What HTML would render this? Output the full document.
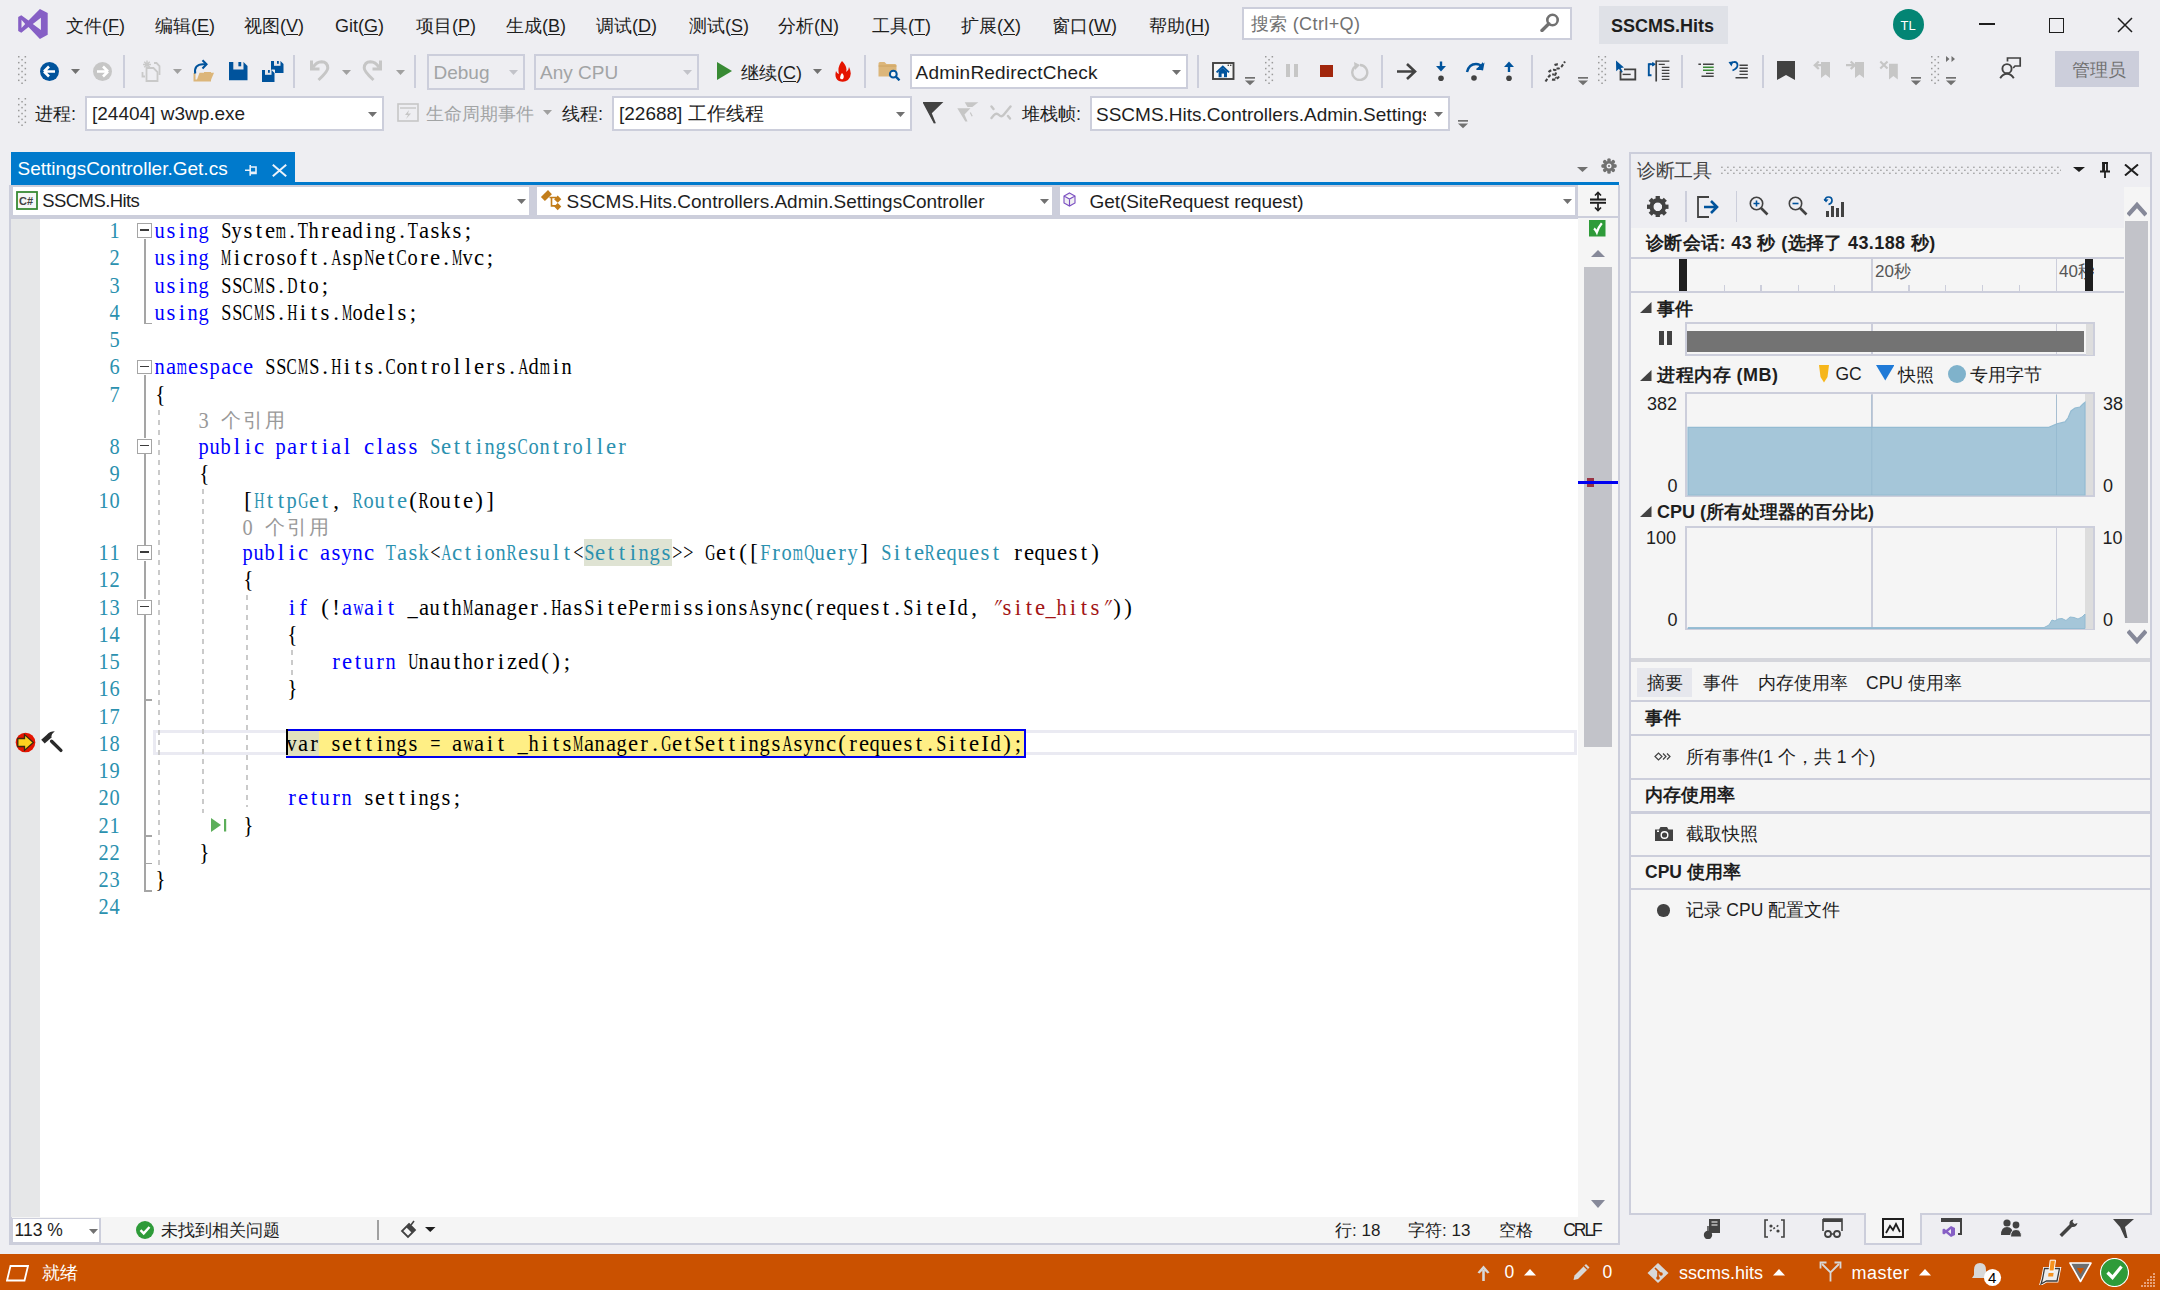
<!DOCTYPE html>
<html><head><meta charset="utf-8"><title>VS</title>
<style>
html,body{margin:0;padding:0;}
body{width:2160px;height:1290px;overflow:hidden;position:relative;background:#EEEEF2;font-family:"Liberation Sans",sans-serif;}
body div, body svg{position:absolute;}
.t{white-space:nowrap;}
u{text-decoration:underline;text-underline-offset:2px;text-decoration-thickness:1px;}
.code{font-family:"Liberation Serif",serif;font-size:22.8px;line-height:27px;white-space:nowrap;}
.c{display:inline-block;width:11px;text-align:center;font-style:normal;}
.c b{display:inline-block;font-weight:normal;}
</style></head><body>
<svg style="left:18px;top:9px;" width="30" height="30" viewBox="0 0 30 30"><path fill="#865FC5" fill-rule="evenodd" d="M21.9 0.1 L29.7 4 V25.7 L21.9 29.9 L10.5 18.1 L3.3 23.7 L0.2 22 V8 L3.3 6.2 L10.5 11.6 Z M3.5 10.8 L7.2 14.9 L3.5 18.9 Z M22.9 8.8 L14.8 14.9 L22.9 21 Z"/></svg><div class="t" style="left:66px;top:16.76px;font-size:18px;line-height:18px;color:#1E1E1E;">文件(<u>F</u>)</div><div class="t" style="left:155px;top:16.76px;font-size:18px;line-height:18px;color:#1E1E1E;">编辑(<u>E</u>)</div><div class="t" style="left:244px;top:16.76px;font-size:18px;line-height:18px;color:#1E1E1E;">视图(<u>V</u>)</div><div class="t" style="left:335px;top:16.76px;font-size:18px;line-height:18px;color:#1E1E1E;">Git(<u>G</u>)</div><div class="t" style="left:416px;top:16.76px;font-size:18px;line-height:18px;color:#1E1E1E;">项目(<u>P</u>)</div><div class="t" style="left:506px;top:16.76px;font-size:18px;line-height:18px;color:#1E1E1E;">生成(<u>B</u>)</div><div class="t" style="left:596px;top:16.76px;font-size:18px;line-height:18px;color:#1E1E1E;">调试(<u>D</u>)</div><div class="t" style="left:689px;top:16.76px;font-size:18px;line-height:18px;color:#1E1E1E;">测试(<u>S</u>)</div><div class="t" style="left:778px;top:16.76px;font-size:18px;line-height:18px;color:#1E1E1E;">分析(<u>N</u>)</div><div class="t" style="left:872px;top:16.76px;font-size:18px;line-height:18px;color:#1E1E1E;">工具(<u>T</u>)</div><div class="t" style="left:961px;top:16.76px;font-size:18px;line-height:18px;color:#1E1E1E;">扩展(<u>X</u>)</div><div class="t" style="left:1052px;top:16.76px;font-size:18px;line-height:18px;color:#1E1E1E;">窗口(<u>W</u>)</div><div class="t" style="left:1149px;top:16.76px;font-size:18px;line-height:18px;color:#1E1E1E;">帮助(<u>H</u>)</div><div style="left:1242px;top:7px;width:330px;height:33px;background:#fff;border:2px solid #CCCEDB;box-sizing:border-box"></div><div class="t" style="left:1250.5px;top:14.76px;font-size:18px;line-height:18px;color:#717171;letter-spacing:0.400px;">搜索 (Ctrl+Q)</div><svg style="left:1540px;top:13px;" width="20" height="19" viewBox="0 0 20 19"><circle cx="12.5" cy="7" r="5.2" fill="none" stroke="#717171" stroke-width="2.6"/><path d="M8.8 10.8 L2 17.5" stroke="#717171" stroke-width="3.4" stroke-linecap="round"/></svg><div style="left:1599px;top:6px;width:129px;height:38px;background:#DFE1E7"></div><div class="t" style="left:1611px;top:16.76px;font-size:18px;line-height:18px;color:#1E1E1E;font-weight:bold;">SSCMS.Hits</div><div style="left:1893px;top:9px;width:31px;height:31px;background:#038574;border-radius:50%"></div><div class="t" style="left:1900.5px;top:19.00px;font-size:13px;line-height:13px;color:#fff;">TL</div><div style="left:1979px;top:23px;width:16px;height:1.6px;background:#1E1E1E"></div><div style="left:2048.5px;top:17.5px;width:15px;height:15px;border:1.6px solid #1E1E1E;box-sizing:border-box"></div><svg style="left:2117px;top:17px;" width="16" height="16" viewBox="0 0 16 16"><path d="M1 1 L15 15 M15 1 L1 15" stroke="#1E1E1E" stroke-width="1.5"/></svg><svg style="left:17.5px;top:56px;" width="9" height="29" viewBox="0 0 9 29"><rect x="0" y="0.0" width="1.5" height="1.5" fill="#9A9A9A"/><rect x="6.6" y="0.0" width="1.5" height="1.5" fill="#9A9A9A"/><rect x="3.3" y="3.0" width="1.5" height="1.5" fill="#9A9A9A"/><rect x="0" y="5.9" width="1.5" height="1.5" fill="#9A9A9A"/><rect x="6.6" y="5.9" width="1.5" height="1.5" fill="#9A9A9A"/><rect x="3.3" y="8.9" width="1.5" height="1.5" fill="#9A9A9A"/><rect x="0" y="11.8" width="1.5" height="1.5" fill="#9A9A9A"/><rect x="6.6" y="11.8" width="1.5" height="1.5" fill="#9A9A9A"/><rect x="3.3" y="14.8" width="1.5" height="1.5" fill="#9A9A9A"/><rect x="0" y="17.7" width="1.5" height="1.5" fill="#9A9A9A"/><rect x="6.6" y="17.7" width="1.5" height="1.5" fill="#9A9A9A"/><rect x="3.3" y="20.6" width="1.5" height="1.5" fill="#9A9A9A"/><rect x="0" y="23.6" width="1.5" height="1.5" fill="#9A9A9A"/><rect x="6.6" y="23.6" width="1.5" height="1.5" fill="#9A9A9A"/><rect x="3.3" y="26.5" width="1.5" height="1.5" fill="#9A9A9A"/></svg><svg style="left:40px;top:62px;" width="19" height="19" viewBox="0 0 19 19"><circle cx="9.5" cy="9.5" r="9.5" fill="#00539C"/><path d="M4 9.5 L9 4.5 M4 9.5 L9 14.5 M4 9.5 H15" stroke="#fff" stroke-width="2.6" fill="none"/></svg><svg style="left:71px;top:69px;" width="9" height="5" viewBox="0 0 9 5"><path d="M0 0 H9 L4.5 5 Z" fill="#717171"/></svg><svg style="left:93px;top:62px;" width="19" height="19" viewBox="0 0 19 19"><circle cx="9.5" cy="9.5" r="9.5" fill="#C6C6C6"/><path d="M15 9.5 L10 4.5 M15 9.5 L10 14.5 M15 9.5 H4" stroke="#fff" stroke-width="2.6" fill="none"/></svg><div style="left:123px;top:55px;width:2px;height:33px;background:#CCCEDB"></div><svg style="left:140px;top:59px;" width="22" height="23" viewBox="0 0 22 23"><path d="M3 5.5 H11 M7 1.5 V9.5 M4.2 2.7 L9.8 8.3 M9.8 2.7 L4.2 8.3" stroke="#C9C9C9" stroke-width="1.4"/><path d="M14 4 H16.5 L19.5 7 V16" stroke="#C9C9C9" stroke-width="1.8" fill="none"/><path d="M2.5 13 V17.5 H5 M6.5 9 V22 H17.5 V13 L13.5 9 Z" stroke="#C9C9C9" stroke-width="1.8" fill="none"/></svg><svg style="left:173px;top:69px;" width="9" height="5" viewBox="0 0 9 5"><path d="M0 0 H9 L4.5 5 Z" fill="#A0A0A0"/></svg><svg style="left:192px;top:59px;" width="23" height="23" viewBox="0 0 23 23"><path d="M2.5 14 V21.5 H18 V14 H12" stroke="#DCB67A" stroke-width="2" fill="none"/><path d="M4.5 22 L7.5 13.8 H22 L18.5 22 Z" fill="#DCB67A"/><path d="M3.2 14.5 Q1.8 5.5 11 5.2 H13" stroke="#00539C" stroke-width="2.1" fill="none"/><path d="M10.5 1.2 L14.5 5.3 L10.5 9.4" stroke="#00539C" stroke-width="2.1" fill="none"/></svg><svg style="left:228.5px;top:61.8px;" width="19" height="19" viewBox="0 0 19 19"><path d="M0 0 H14.5 L18.5 4 V18.3 H0 Z" fill="#00539C"/><rect x="4.3" y="0" width="10.2" height="7.5" fill="#E8E8EC"/><rect x="9.4" y="0" width="2.8" height="4.3" fill="#00539C"/></svg><svg style="left:260.5px;top:59.5px;" width="23" height="23" viewBox="0 0 23 23"><g transform="translate(10 1)"><path d="M0 0 H9.5 L12.5 3 V12 H0 Z" fill="#00539C"/><rect x="3" y="0" width="6.5" height="4.8" fill="#E8E8EC"/><rect x="6" y="0" width="1.8" height="2.8" fill="#00539C"/></g><path d="M10.5 9.5 H13.5 L14 10 V22 H0.5 V10 H10.5 Z" fill="#EEEEF2"/><g transform="translate(1 10)"><path d="M0 0 H9.5 L12.5 3 V12 H0 Z" fill="#00539C"/><rect x="3" y="0" width="6.5" height="4.8" fill="#E8E8EC"/><rect x="6" y="0" width="1.8" height="2.8" fill="#00539C"/></g></svg><div style="left:293px;top:55px;width:2px;height:33px;background:#CCCEDB"></div><svg style="left:308px;top:58px;" width="22" height="24" viewBox="0 0 22 24"><path d="M3.5 2.5 V11 H11.5" stroke="#C6C6C6" stroke-width="3" fill="none"/><path d="M5 9.5 Q8.5 3.8 13.5 3.8 Q19.5 4 19.8 10 Q19.8 13.5 10.5 22" stroke="#C6C6C6" stroke-width="3" fill="none"/></svg><svg style="left:342px;top:70px;" width="9" height="5" viewBox="0 0 9 5"><path d="M0 0 H9 L4.5 5 Z" fill="#A0A0A0"/></svg><svg style="left:362px;top:58px;" width="22" height="24" viewBox="0 0 22 24"><path d="M18.5 2.5 V11 H10.5" stroke="#C6C6C6" stroke-width="3" fill="none"/><path d="M17 9.5 Q13.5 3.8 8.5 3.8 Q2.5 4 2.2 10 Q2.2 13.5 11.5 22" stroke="#C6C6C6" stroke-width="3" fill="none"/></svg><svg style="left:396px;top:70px;" width="9" height="5" viewBox="0 0 9 5"><path d="M0 0 H9 L4.5 5 Z" fill="#A0A0A0"/></svg><div style="left:414px;top:55px;width:2px;height:33px;background:#CCCEDB"></div><div style="left:427px;top:54px;width:98px;height:36px;background:transparent;border:2px solid #CCCEDB;box-sizing:border-box"></div><div class="t" style="left:433.5px;top:63.42px;font-size:19px;line-height:19px;color:#A2A4A5;">Debug</div><svg style="left:509px;top:70.0px;" width="9" height="5" viewBox="0 0 9 5"><path d="M0 0 H9 L4.5 5 Z" fill="#C2C3C9"/></svg><div style="left:534px;top:54px;width:165px;height:36px;background:transparent;border:2px solid #CCCEDB;box-sizing:border-box"></div><div class="t" style="left:540px;top:63.42px;font-size:19px;line-height:19px;color:#A2A4A5;">Any CPU</div><svg style="left:683px;top:70.0px;" width="9" height="5" viewBox="0 0 9 5"><path d="M0 0 H9 L4.5 5 Z" fill="#C2C3C9"/></svg><svg style="left:717px;top:62px;" width="15" height="18" viewBox="0 0 15 18"><path d="M0 0 L15 9 L0 18 Z" fill="#388A34"/></svg><div class="t" style="left:741px;top:64.26px;font-size:18px;line-height:18px;color:#1E1E1E;">继续(<u>C</u>)</div><svg style="left:813px;top:69px;" width="9" height="5" viewBox="0 0 9 5"><path d="M0 0 H9 L4.5 5 Z" fill="#717171"/></svg><svg style="left:834px;top:61px;" width="17" height="21" viewBox="0 0 17 21"><path d="M8 0 Q14 6 12 11 Q15 9 15 6 Q19 14 14 19 Q10 22 5 20 Q0 17 2 10 Q3 13 5 13 Q3 6 8 0 Z" fill="#E51400"/><path d="M8 12 Q11 15 9 18 Q7 19 6 17 Q6 14 8 12 Z" fill="#fff"/></svg><div style="left:864px;top:55px;width:2px;height:33px;background:#CCCEDB"></div><svg style="left:878px;top:61px;" width="23" height="20" viewBox="0 0 23 20"><path d="M0.5 2.5 Q0.5 1 2 1 H6.5 L8.5 3 H17 Q18.5 3 18.5 4.5 V15.5 H0.5 Z" fill="#DCB67A"/><path d="M0.5 5 H18.5" stroke="#C9A05E" stroke-width="0.8"/><circle cx="15.3" cy="13.2" r="3.4" fill="#F6F6F6" stroke="#00539C" stroke-width="2"/><path d="M17.8 15.7 L21.5 19.3" stroke="#00539C" stroke-width="2.4"/></svg><div style="left:910px;top:54px;width:278px;height:35px;background:#fff;border:2px solid #CCCEDB;box-sizing:border-box"></div><svg style="left:1172px;top:69.5px;" width="9" height="5" viewBox="0 0 9 5"><path d="M0 0 H9 L4.5 5 Z" fill="#717171"/></svg><div class="t" style="left:915.5px;top:62.92px;font-size:19px;line-height:19px;color:#1E1E1E;letter-spacing:0.208px;">AdminRedirectCheck</div><div style="left:1197px;top:55px;width:2px;height:33px;background:#CCCEDB"></div><svg style="left:1211.5px;top:62px;" width="23" height="18" viewBox="0 0 23 18"><rect x="1" y="1" width="20.5" height="16" fill="#F6F6F6" stroke="#424242" stroke-width="1.9"/><path d="M4.6 10.4 L10.8 4.6 L17 10.4" stroke="#00539C" stroke-width="1.9" fill="none"/><path d="M6.6 9.4 L10.8 5.8 L15 9.4 V15.3 H6.6 Z" fill="#00539C"/><rect x="9.6" y="11.6" width="2.4" height="3.7" fill="#F6F6F6"/><rect x="15.6" y="2.6" width="1.4" height="1.4" fill="#424242"/><rect x="18" y="2.6" width="1.4" height="1.4" fill="#424242"/></svg><svg style="left:1245px;top:77px;" width="10" height="10" viewBox="0 0 10 10"><rect x="0" y="0" width="10" height="1.7" fill="#717171"/><path d="M0 3.6 H10 L5 8.3 Z" fill="#717171"/></svg><svg style="left:1264.5px;top:56px;" width="9" height="29" viewBox="0 0 9 29"><rect x="0" y="0.0" width="1.5" height="1.5" fill="#9A9A9A"/><rect x="6.6" y="0.0" width="1.5" height="1.5" fill="#9A9A9A"/><rect x="3.3" y="3.0" width="1.5" height="1.5" fill="#9A9A9A"/><rect x="0" y="5.9" width="1.5" height="1.5" fill="#9A9A9A"/><rect x="6.6" y="5.9" width="1.5" height="1.5" fill="#9A9A9A"/><rect x="3.3" y="8.9" width="1.5" height="1.5" fill="#9A9A9A"/><rect x="0" y="11.8" width="1.5" height="1.5" fill="#9A9A9A"/><rect x="6.6" y="11.8" width="1.5" height="1.5" fill="#9A9A9A"/><rect x="3.3" y="14.8" width="1.5" height="1.5" fill="#9A9A9A"/><rect x="0" y="17.7" width="1.5" height="1.5" fill="#9A9A9A"/><rect x="6.6" y="17.7" width="1.5" height="1.5" fill="#9A9A9A"/><rect x="3.3" y="20.6" width="1.5" height="1.5" fill="#9A9A9A"/><rect x="0" y="23.6" width="1.5" height="1.5" fill="#9A9A9A"/><rect x="6.6" y="23.6" width="1.5" height="1.5" fill="#9A9A9A"/><rect x="3.3" y="26.5" width="1.5" height="1.5" fill="#9A9A9A"/></svg><div style="left:1286.2px;top:63.7px;width:4.2px;height:13px;background:#C6C6C6"></div><div style="left:1293.8px;top:63.7px;width:4.2px;height:13px;background:#C6C6C6"></div><div style="left:1320px;top:65px;width:12.5px;height:12px;background:#A1260D"></div><svg style="left:1351px;top:61px;" width="18" height="20" viewBox="0 0 18 20"><path d="M5 5 A7.5 7.5 0 1 0 9 4" stroke="#C6C6C6" stroke-width="2.4" fill="none"/><path d="M3 1 L9 4 L4 9" fill="#C6C6C6"/></svg><div style="left:1380.5px;top:55px;width:2px;height:33px;background:#CCCEDB"></div><svg style="left:1396px;top:62px;" width="22" height="19" viewBox="0 0 22 19"><path d="M1 9.5 H19 M11 2 L19 9.5 L11 17" stroke="#424242" stroke-width="2.6" fill="none"/></svg><svg style="left:1435px;top:61px;" width="12" height="21" viewBox="0 0 12 21"><path d="M6 0.5 V6" stroke="#00539C" stroke-width="2.4"/><path d="M1 5 H11 L6 10.5 Z" fill="#00539C"/><circle cx="6" cy="17.3" r="2.8" fill="#424242"/></svg><svg style="left:1465px;top:61px;" width="20" height="21" viewBox="0 0 20 21"><path d="M2 11 Q4 3 11 3 Q15 3 17 6" stroke="#00539C" stroke-width="2.4" fill="none"/><path d="M18 1 V9 H11" fill="#00539C"/><path d="M19.5 1.5 L18 9.5 L11 8 Z" fill="#00539C"/><circle cx="9" cy="17" r="2.8" fill="#424242"/></svg><svg style="left:1503px;top:61px;" width="12" height="21" viewBox="0 0 12 21"><path d="M6 5 V11" stroke="#00539C" stroke-width="2.4"/><path d="M1 6 H11 L6 0.5 Z" fill="#00539C"/><circle cx="6" cy="17.3" r="2.8" fill="#424242"/></svg><div style="left:1530.5px;top:55px;width:2px;height:33px;background:#CCCEDB"></div><svg style="left:1544px;top:60px;" width="23" height="23" viewBox="0 0 23 23"><g stroke="#424242" stroke-width="2.1" fill="none" stroke-dasharray="3.2 1.8"><path d="M1.5 21.5 L4.5 17 Q6.5 14 10 14.5"/><path d="M12.5 8.5 Q16 9 18 6 L21 1.5"/><path d="M4.5 12 Q8 9 11 10 Q13 11 11.5 14 Q10 17 12.5 18"/><path d="M10.5 5 Q13 4 14.5 4.5 M8 19.5 Q13 20.5 16 15"/></g></svg><svg style="left:1578px;top:77px;" width="10" height="10" viewBox="0 0 10 10"><rect x="0" y="0" width="10" height="1.7" fill="#717171"/><path d="M0 3.6 H10 L5 8.3 Z" fill="#717171"/></svg><svg style="left:1597.5px;top:56px;" width="9" height="29" viewBox="0 0 9 29"><rect x="0" y="0.0" width="1.5" height="1.5" fill="#9A9A9A"/><rect x="6.6" y="0.0" width="1.5" height="1.5" fill="#9A9A9A"/><rect x="3.3" y="3.0" width="1.5" height="1.5" fill="#9A9A9A"/><rect x="0" y="5.9" width="1.5" height="1.5" fill="#9A9A9A"/><rect x="6.6" y="5.9" width="1.5" height="1.5" fill="#9A9A9A"/><rect x="3.3" y="8.9" width="1.5" height="1.5" fill="#9A9A9A"/><rect x="0" y="11.8" width="1.5" height="1.5" fill="#9A9A9A"/><rect x="6.6" y="11.8" width="1.5" height="1.5" fill="#9A9A9A"/><rect x="3.3" y="14.8" width="1.5" height="1.5" fill="#9A9A9A"/><rect x="0" y="17.7" width="1.5" height="1.5" fill="#9A9A9A"/><rect x="6.6" y="17.7" width="1.5" height="1.5" fill="#9A9A9A"/><rect x="3.3" y="20.6" width="1.5" height="1.5" fill="#9A9A9A"/><rect x="0" y="23.6" width="1.5" height="1.5" fill="#9A9A9A"/><rect x="6.6" y="23.6" width="1.5" height="1.5" fill="#9A9A9A"/><rect x="3.3" y="26.5" width="1.5" height="1.5" fill="#9A9A9A"/></svg><svg style="left:1615px;top:60px;" width="22" height="21" viewBox="0 0 22 21"><path d="M1 0.5 L9 7.5 L5.8 8 L7.8 12 L6 12.8 L4 8.8 L1.2 11.2 Z" fill="#00539C"/><path d="M5.5 11 V19.5 H20.3 V9.3 H9" stroke="#424242" stroke-width="1.8" fill="none"/><path d="M7.6 14.4 H15.7" stroke="#424242" stroke-width="1.4"/></svg><svg style="left:1647px;top:60px;" width="24" height="23" viewBox="0 0 24 23"><path d="M4.5 4.2 H1.8 V15.2 H4.5" stroke="#00539C" stroke-width="1.9" fill="none"/><path d="M2 4.2 H6.5 M5.2 2.6 L7.6 4.2 L5.2 5.8" stroke="#00539C" stroke-width="1.5" fill="none"/><path d="M9.2 0.5 V21.5" stroke="#424242" stroke-width="1.7"/><path d="M9.2 1.2 H22.4 M11.7 4.3 H17.8 M14.8 7.3 H22.4 M14.8 10.3 H22.4 M14.8 13.4 H22.4 M14.8 16.4 H22.4 M14.8 19.4 H22.4" stroke="#424242" stroke-width="1.3"/></svg><div style="left:1681px;top:55px;width:2px;height:33px;background:#CCCEDB"></div><svg style="left:1697px;top:60px;" width="18" height="18" viewBox="0 0 18 18"><path d="M1.4 4.2 H4 M6 4.2 H16.7 M9 13.4 H16.7 M4.5 16.2 H16.7" stroke="#424242" stroke-width="1.4"/><path d="M6 7.3 H16.7 M6 10.3 H16.7" stroke="#388A34" stroke-width="1.6"/></svg><svg style="left:1728px;top:60px;" width="21" height="20" viewBox="0 0 21 20"><path d="M2.5 4.2 Q4 1.8 6.5 1.8 Q9.5 2 9.5 5 Q9.5 8.5 4.5 10.5" stroke="#00539C" stroke-width="1.8" fill="none"/><path d="M0.5 2 L3.5 6.5 L5.2 1.5 Z" fill="#00539C"/><path d="M11.5 5.2 H19.8 M11.5 8.3 H19.8 M11.5 11.3 H19.8 M11.5 14.4 H19.8 M7.5 17.8 H19.8" stroke="#424242" stroke-width="1.4"/></svg><div style="left:1762px;top:55px;width:2px;height:33px;background:#CCCEDB"></div><svg style="left:1777px;top:61px;" width="18" height="19" viewBox="0 0 18 19"><path d="M0 0 H18 V19 L9 14 L0 19 Z" fill="#424242"/></svg><svg style="left:1812px;top:60px;" width="22" height="21" viewBox="0 0 22 21"><path d="M9 2 H18 V18 L13.5 14.5 L9 18 Z" fill="#C6C6C6"/><path d="M11.5 5.2 H3.5 M6.8 1.5 L2.8 5.2 L6.8 9" stroke="#C6C6C6" stroke-width="2.3" fill="none"/></svg><svg style="left:1845px;top:60px;" width="22" height="21" viewBox="0 0 22 21"><path d="M10 2 H19 V18 L14.5 14.5 L10 18 Z" fill="#C6C6C6"/><path d="M1 5.2 H9 M5.7 1.5 L9.7 5.2 L5.7 9" stroke="#C6C6C6" stroke-width="2.3" fill="none"/></svg><svg style="left:1878px;top:60px;" width="22" height="21" viewBox="0 0 22 21"><path d="M11 3.7 H19.8 V19.4 L15.4 15.9 L11 19.4 Z" fill="#C6C6C6"/><path d="M2.3 1.5 L9.5 8.5 M9.5 1.5 L2.3 8.5" stroke="#C6C6C6" stroke-width="2.2"/></svg><svg style="left:1911px;top:77px;" width="10" height="10" viewBox="0 0 10 10"><rect x="0" y="0" width="10" height="1.7" fill="#717171"/><path d="M0 3.6 H10 L5 8.3 Z" fill="#717171"/></svg><svg style="left:1930.5px;top:56px;" width="9" height="29" viewBox="0 0 9 29"><rect x="0" y="0.0" width="1.5" height="1.5" fill="#9A9A9A"/><rect x="6.6" y="0.0" width="1.5" height="1.5" fill="#9A9A9A"/><rect x="3.3" y="3.0" width="1.5" height="1.5" fill="#9A9A9A"/><rect x="0" y="5.9" width="1.5" height="1.5" fill="#9A9A9A"/><rect x="6.6" y="5.9" width="1.5" height="1.5" fill="#9A9A9A"/><rect x="3.3" y="8.9" width="1.5" height="1.5" fill="#9A9A9A"/><rect x="0" y="11.8" width="1.5" height="1.5" fill="#9A9A9A"/><rect x="6.6" y="11.8" width="1.5" height="1.5" fill="#9A9A9A"/><rect x="3.3" y="14.8" width="1.5" height="1.5" fill="#9A9A9A"/><rect x="0" y="17.7" width="1.5" height="1.5" fill="#9A9A9A"/><rect x="6.6" y="17.7" width="1.5" height="1.5" fill="#9A9A9A"/><rect x="3.3" y="20.6" width="1.5" height="1.5" fill="#9A9A9A"/><rect x="0" y="23.6" width="1.5" height="1.5" fill="#9A9A9A"/><rect x="6.6" y="23.6" width="1.5" height="1.5" fill="#9A9A9A"/><rect x="3.3" y="26.5" width="1.5" height="1.5" fill="#9A9A9A"/></svg><svg style="left:1946px;top:56px;" width="10" height="8" viewBox="0 0 10 8"><path d="M0 0 L3.5 3 L0 6 Z M5.5 0 L9 3 L5.5 6 Z" fill="#717171"/></svg><svg style="left:1946px;top:77px;" width="10" height="10" viewBox="0 0 10 10"><rect x="0" y="0" width="10" height="1.7" fill="#717171"/><path d="M0 3.6 H10 L5 8.3 Z" fill="#717171"/></svg><svg style="left:1998px;top:56px;" width="24" height="24" viewBox="0 0 24 24"><circle cx="9" cy="12.7" r="4.6" fill="none" stroke="#424242" stroke-width="1.9"/><path d="M2.2 22.3 Q5 17.8 9 17.8 Q13 17.8 15.8 22.3" stroke="#424242" stroke-width="1.9" fill="none"/><path d="M9.5 5.5 V2 H22.2 V10 H17 L15.2 12" stroke="#424242" stroke-width="1.7" fill="none"/></svg><div style="left:2055px;top:50.5px;width:84px;height:36px;background:#CCCEDB"></div><div class="t" style="left:2072px;top:61.26px;font-size:18px;line-height:18px;color:#717171;">管理员</div><svg style="left:17.5px;top:98px;" width="9" height="29" viewBox="0 0 9 29"><rect x="0" y="0.0" width="1.5" height="1.5" fill="#9A9A9A"/><rect x="6.6" y="0.0" width="1.5" height="1.5" fill="#9A9A9A"/><rect x="3.3" y="3.0" width="1.5" height="1.5" fill="#9A9A9A"/><rect x="0" y="5.9" width="1.5" height="1.5" fill="#9A9A9A"/><rect x="6.6" y="5.9" width="1.5" height="1.5" fill="#9A9A9A"/><rect x="3.3" y="8.9" width="1.5" height="1.5" fill="#9A9A9A"/><rect x="0" y="11.8" width="1.5" height="1.5" fill="#9A9A9A"/><rect x="6.6" y="11.8" width="1.5" height="1.5" fill="#9A9A9A"/><rect x="3.3" y="14.8" width="1.5" height="1.5" fill="#9A9A9A"/><rect x="0" y="17.7" width="1.5" height="1.5" fill="#9A9A9A"/><rect x="6.6" y="17.7" width="1.5" height="1.5" fill="#9A9A9A"/><rect x="3.3" y="20.6" width="1.5" height="1.5" fill="#9A9A9A"/><rect x="0" y="23.6" width="1.5" height="1.5" fill="#9A9A9A"/><rect x="6.6" y="23.6" width="1.5" height="1.5" fill="#9A9A9A"/><rect x="3.3" y="26.5" width="1.5" height="1.5" fill="#9A9A9A"/></svg><div class="t" style="left:35px;top:104.76px;font-size:18px;line-height:18px;color:#1E1E1E;">进程:</div><div style="left:85px;top:96px;width:299px;height:35px;background:#fff;border:2px solid #CCCEDB;box-sizing:border-box"></div><div class="t" style="left:92px;top:104.42px;font-size:19px;line-height:19px;color:#1E1E1E;">[24404] w3wp.exe</div><svg style="left:368px;top:111.5px;" width="9" height="5" viewBox="0 0 9 5"><path d="M0 0 H9 L4.5 5 Z" fill="#717171"/></svg><svg style="left:397px;top:103px;" width="22" height="19" viewBox="0 0 22 19"><rect x="1" y="1" width="20" height="17" fill="none" stroke="#C6C6C6" stroke-width="1.6"/><path d="M3 5 H19" stroke="#C6C6C6" stroke-width="1.4"/><path d="M12 7 L8 12 H11 L9 16 L14 10.5 H11 Z" fill="#C6C6C6"/></svg><div class="t" style="left:426px;top:104.76px;font-size:18px;line-height:18px;color:#A2A4A5;">生命周期事件</div><svg style="left:543px;top:110px;" width="9" height="5" viewBox="0 0 9 5"><path d="M0 0 H9 L4.5 5 Z" fill="#A0A0A0"/></svg><div class="t" style="left:562px;top:104.76px;font-size:18px;line-height:18px;color:#1E1E1E;">线程:</div><div style="left:612px;top:96px;width:300px;height:35px;background:#fff;border:2px solid #CCCEDB;box-sizing:border-box"></div><div class="t" style="left:619px;top:104.42px;font-size:19px;line-height:19px;color:#1E1E1E;">[22688] 工作线程</div><svg style="left:896px;top:111.5px;" width="9" height="5" viewBox="0 0 9 5"><path d="M0 0 H9 L4.5 5 Z" fill="#717171"/></svg><svg style="left:922.5px;top:102.3px;" width="22" height="22" viewBox="0 0 22 22"><path d="M0 0 H20.4 L8.8 11.3 L12.9 21.3 L11.2 21.3 Z" fill="#424242"/><path d="M0.2 0 L11.4 21.3" stroke="#424242" stroke-width="1.2"/></svg><svg style="left:956.5px;top:102.3px;" width="22" height="22" viewBox="0 0 22 22"><path d="M7.7 0.2 H21.3 L15.3 5 H10.5 Z" fill="#C6C6C6"/><path d="M0.3 6.3 H13.5 L7.5 12.5 L10.5 19.5 H8.3 Z" fill="#C6C6C6"/><path d="M13.3 10.5 L15.2 14.3" stroke="#C6C6C6" stroke-width="1.2"/></svg><svg style="left:989.5px;top:104.5px;" width="22" height="18" viewBox="0 0 22 18"><path d="M1.5 1.5 L3.5 4 M20.5 1.5 L13.5 10 Q11.5 12.5 9 10 Q6.5 7.5 4 10 L1.5 13 M18 11 L20 13.5" stroke="#C6C6C6" stroke-width="2.4" fill="none" stroke-linecap="round"/></svg><div class="t" style="left:1022px;top:104.76px;font-size:18px;line-height:18px;color:#1E1E1E;">堆栈帧:</div><div style="left:1090px;top:96px;width:360px;height:35px;background:#fff;border:2px solid #CCCEDB;box-sizing:border-box"></div><svg style="left:1434px;top:111.5px;" width="9" height="5" viewBox="0 0 9 5"><path d="M0 0 H9 L4.5 5 Z" fill="#717171"/></svg><div class="t" style="left:1096px;top:104px;width:330px;height:24px;overflow:hidden;font-size:19px;line-height:19px;color:#1E1E1E;white-space:nowrap"><div style="position:relative;top:0.5px">SSCMS.Hits.Controllers.Admin.SettingsController.Get</div></div><svg style="left:1458px;top:120px;" width="10" height="10" viewBox="0 0 10 10"><rect x="0" y="0" width="10" height="1.7" fill="#717171"/><path d="M0 3.6 H10 L5 8.3 Z" fill="#717171"/></svg><div style="left:11px;top:152px;width:284px;height:31px;background:#007ACC"></div><div class="t" style="left:17.5px;top:159.42px;font-size:19px;line-height:19px;color:#fff;">SettingsController.Get.cs</div><svg style="left:244px;top:164px;" width="14" height="13" viewBox="0 0 14 13"><path d="M1 6.3 H6.2 M6.2 1 V11.8" stroke="#E8F1FA" stroke-width="1.6" fill="none"/><path d="M6.2 3 H12 V9.5 H6.2 M6.2 8.3 H12" stroke="#E8F1FA" stroke-width="1.6" fill="none"/></svg><svg style="left:272px;top:163.5px;" width="15" height="13" viewBox="0 0 15 13"><path d="M0.8 0.8 L14.2 12.2 M14.2 0.8 L0.8 12.2" stroke="#EAF2FA" stroke-width="2"/></svg><div style="left:11px;top:182px;width:1608px;height:3px;background:#007ACC"></div><svg style="left:1577px;top:167px;" width="11" height="5" viewBox="0 0 11 5"><path d="M0 0 H11 L5.5 5 Z" fill="#717171"/></svg><svg style="left:1601px;top:158px;" width="16" height="16" viewBox="0 0 16 16"><g transform="translate(8 8)"><circle r="5.3" fill="#717171"/><circle r="2.5" fill="#EEEEF2"/><circle r="1.1" fill="#717171"/><circle cx="0" cy="-5.9" r="1.9" fill="#717171" transform="rotate(0)"/><circle cx="0" cy="-5.9" r="1.9" fill="#717171" transform="rotate(45)"/><circle cx="0" cy="-5.9" r="1.9" fill="#717171" transform="rotate(90)"/><circle cx="0" cy="-5.9" r="1.9" fill="#717171" transform="rotate(135)"/><circle cx="0" cy="-5.9" r="1.9" fill="#717171" transform="rotate(180)"/><circle cx="0" cy="-5.9" r="1.9" fill="#717171" transform="rotate(225)"/><circle cx="0" cy="-5.9" r="1.9" fill="#717171" transform="rotate(270)"/><circle cx="0" cy="-5.9" r="1.9" fill="#717171" transform="rotate(315)"/></g></svg><div style="left:9px;top:185px;width:1611px;height:1060px;background:#CCCEDB"></div><div style="left:13px;top:187px;width:516px;height:28px;background:#fff"></div><svg style="left:16px;top:191px" width="22" height="19" viewBox="0 0 22 19"><rect x="1" y="1" width="20" height="17" fill="#F6F6F6" stroke="#388A34" stroke-width="1.8"/><text x="3" y="14" font-family="Liberation Sans" font-weight="bold" font-size="11" fill="#424242">C#</text></svg><div class="t" style="left:42.3px;top:192.34px;font-size:18.5px;line-height:18.5px;color:#1E1E1E;letter-spacing:-0.587px;">SSCMS.Hits</div><svg style="left:517px;top:198.5px;" width="9" height="5" viewBox="0 0 9 5"><path d="M0 0 H9 L4.5 5 Z" fill="#717171"/></svg><div style="left:537px;top:187px;width:515px;height:28px;background:#fff"></div><svg style="left:540px;top:189px;" width="23" height="23" viewBox="0 0 23 23"><path d="M0.9 7.9 L8 0.9 L11.9 5.2 L4.9 12.1 Z" fill="#C27D1A"/><path d="M9.5 8.5 H16 M11.5 8.5 V16.9 H16" stroke="#C27D1A" stroke-width="1.6" fill="none"/><path d="M17.7 6.6 L21.3 10.2 L17.7 13.8 L14.1 10.2 Z M17.7 14 L21.3 17.6 L17.7 21.2 L14.1 17.6 Z" fill="#C27D1A"/></svg><div class="t" style="left:566.5px;top:191.92px;font-size:19px;line-height:19px;color:#1E1E1E;letter-spacing:-0.003px;">SSCMS.Hits.Controllers.Admin.SettingsController</div><svg style="left:1040px;top:198.5px;" width="9" height="5" viewBox="0 0 9 5"><path d="M0 0 H9 L4.5 5 Z" fill="#717171"/></svg><div style="left:1060px;top:187px;width:515px;height:28px;background:#fff"></div><svg style="left:1063px;top:192px;" width="13" height="15" viewBox="0 0 13 15"><path d="M6.5 1 L12 4 V11 L6.5 14 L1 11 V4 Z M1 4 L6.5 7 L12 4 M6.5 7 V14" fill="#F0EFF1" stroke="#7B4FC2" stroke-width="1.1"/></svg><div class="t" style="left:1089.5px;top:191.92px;font-size:19px;line-height:19px;color:#1E1E1E;letter-spacing:-0.062px;">Get(SiteRequest request)</div><svg style="left:1563px;top:198.5px;" width="9" height="5" viewBox="0 0 9 5"><path d="M0 0 H9 L4.5 5 Z" fill="#717171"/></svg><div style="left:1577.2px;top:185px;width:40.8px;height:32.2px;background:#F5F5F5;border-left:1px solid #CCCEDB;border-bottom:1px solid #CCCEDB;box-sizing:border-box"></div><svg style="left:1589px;top:190.5px;" width="18" height="21" viewBox="0 0 18 21"><rect x="1" y="8.5" width="16" height="3.3" fill="#CFCFCF"/><path d="M9 2 V8 M9 12.3 V19" stroke="#1E1E1E" stroke-width="1.7"/><path d="M1 8.5 H17 M1 11.8 H17" stroke="#1E1E1E" stroke-width="1.8"/><path d="M6 4.5 L9 1.5 L12 4.5 M6 16.5 L9 19.5 L12 16.5" stroke="#1E1E1E" stroke-width="1.7" fill="none"/></svg><div style="left:11px;top:218.9px;width:1567px;height:998px;background:#fff"></div><div style="left:11px;top:218.9px;width:28.7px;height:998px;background:#E6E7E8"></div><div style="left:152.5px;top:729.8px;width:1424px;height:25.7px;border:3px solid #EAEAF2;box-sizing:border-box"></div><div style="left:583.5px;top:539.3px;width:88.0px;height:26.7px;background:#DFE3D3"></div><div style="left:286.3px;top:729px;width:740px;height:29px;background:#FFEF85;border-top:2px solid #0000F0;border-bottom:2px solid #0000F0;border-right:2px solid #0000F0;box-sizing:border-box"></div><div style="left:286.3px;top:731px;width:33px;height:25px;background:#E1E1BD"></div><div style="left:286.3px;top:729.4px;width:2px;height:25.5px;background:#000"></div><div style="left:158px;top:410.09999999999997px;width:2px;height:457.45px;background:repeating-linear-gradient(to bottom,#CACACA 0,#CACACA 4.8px,transparent 4.8px,transparent 10px)"></div><div style="left:202px;top:488.59999999999997px;width:2px;height:324.45px;background:repeating-linear-gradient(to bottom,#CACACA 0,#CACACA 4.8px,transparent 4.8px,transparent 10px)"></div><div style="left:246px;top:595.05px;width:2px;height:212.0px;background:repeating-linear-gradient(to bottom,#CACACA 0,#CACACA 4.8px,transparent 4.8px,transparent 10px)"></div><div style="left:291px;top:649.55px;width:2px;height:27.25px;background:repeating-linear-gradient(to bottom,#CACACA 0,#CACACA 4.8px,transparent 4.8px,transparent 10px)"></div><div style="left:137px;top:223.45000000000002px;width:14.7px;height:14.7px;background:#fff;border:1.5px solid #A5A5A5;box-sizing:border-box"></div><div style="left:140px;top:229.25000000000003px;width:8.7px;height:1.8px;background:#3C3C3C"></div><div style="left:144.1px;top:238.65px;width:1.8px;height:85.74999999999997px;background:#A5A5A5"></div><div style="left:144.1px;top:322.59999999999997px;width:7.5px;height:1.8px;background:#A5A5A5"></div><div style="left:137px;top:359.7px;width:14.7px;height:14.7px;background:#fff;border:1.5px solid #A5A5A5;box-sizing:border-box"></div><div style="left:140px;top:365.5px;width:8.7px;height:1.8px;background:#3C3C3C"></div><div style="left:144.1px;top:374.9px;width:1.8px;height:63.19999999999999px;background:#A5A5A5"></div><div style="left:137px;top:438.9px;width:14.7px;height:14.7px;background:#fff;border:1.5px solid #A5A5A5;box-sizing:border-box"></div><div style="left:140px;top:444.7px;width:8.7px;height:1.8px;background:#3C3C3C"></div><div style="left:144.1px;top:454.09999999999997px;width:1.8px;height:90.44999999999999px;background:#A5A5A5"></div><div style="left:137px;top:545.3499999999999px;width:14.7px;height:14.7px;background:#fff;border:1.5px solid #A5A5A5;box-sizing:border-box"></div><div style="left:140px;top:551.1499999999999px;width:8.7px;height:1.8px;background:#3C3C3C"></div><div style="left:144.1px;top:560.55px;width:1.8px;height:38.5px;background:#A5A5A5"></div><div style="left:137px;top:599.8499999999999px;width:14.7px;height:14.7px;background:#fff;border:1.5px solid #A5A5A5;box-sizing:border-box"></div><div style="left:140px;top:605.6499999999999px;width:8.7px;height:1.8px;background:#3C3C3C"></div><div style="left:144.1px;top:615.05px;width:1.8px;height:276.5px;background:#A5A5A5"></div><div style="left:144.1px;top:699.0px;width:7.5px;height:1.8px;background:#A5A5A5"></div><div style="left:144.1px;top:835.25px;width:7.5px;height:1.8px;background:#A5A5A5"></div><div style="left:144.1px;top:862.5px;width:7.5px;height:1.8px;background:#A5A5A5"></div><div style="left:144.1px;top:889.75px;width:7.5px;height:1.8px;background:#A5A5A5"></div><div class="code" style="left:109.5px;top:217.15px;color:#2B91AF"><i class="c" style="text-align:left"><b style="margin-left:-0.20px;transform:scaleX(0.895)">1</b></i></div><div class="code" style="left:154.5px;top:217.15px"><span style="color:#0000FF"><i class="c" style="text-align:left"><b style="margin-left:-0.20px;transform:scaleX(0.895)">u</b></i><i class="c">s</i><i class="c">i</i><i class="c" style="text-align:left"><b style="margin-left:-0.20px;transform:scaleX(0.895)">n</b></i><i class="c" style="text-align:left"><b style="margin-left:-0.20px;transform:scaleX(0.895)">g</b></i></span><span style="color:#000000"><i class="c"> </i><i class="c" style="text-align:left"><b style="margin-left:-0.84px;transform:scaleX(0.804)">S</b></i><i class="c" style="text-align:left"><b style="margin-left:-0.20px;transform:scaleX(0.895)">y</b></i><i class="c">s</i><i class="c">t</i><i class="c">e</i><i class="c" style="text-align:left"><b style="margin-left:-3.37px;transform:scaleX(0.575)">m</b></i><i class="c">.</i><i class="c" style="text-align:left"><b style="margin-left:-1.46px;transform:scaleX(0.732)">T</b></i><i class="c" style="text-align:left"><b style="margin-left:-0.20px;transform:scaleX(0.895)">h</b></i><i class="c">r</i><i class="c">e</i><i class="c">a</i><i class="c" style="text-align:left"><b style="margin-left:-0.20px;transform:scaleX(0.895)">d</b></i><i class="c">i</i><i class="c" style="text-align:left"><b style="margin-left:-0.20px;transform:scaleX(0.895)">n</b></i><i class="c" style="text-align:left"><b style="margin-left:-0.20px;transform:scaleX(0.895)">g</b></i><i class="c">.</i><i class="c" style="text-align:left"><b style="margin-left:-1.46px;transform:scaleX(0.732)">T</b></i><i class="c">a</i><i class="c">s</i><i class="c" style="text-align:left"><b style="margin-left:-0.20px;transform:scaleX(0.895)">k</b></i><i class="c">s</i><i class="c">;</i></span></div><div class="code" style="left:109.5px;top:244.40px;color:#2B91AF"><i class="c" style="text-align:left"><b style="margin-left:-0.20px;transform:scaleX(0.895)">2</b></i></div><div class="code" style="left:154.5px;top:244.40px"><span style="color:#0000FF"><i class="c" style="text-align:left"><b style="margin-left:-0.20px;transform:scaleX(0.895)">u</b></i><i class="c">s</i><i class="c">i</i><i class="c" style="text-align:left"><b style="margin-left:-0.20px;transform:scaleX(0.895)">n</b></i><i class="c" style="text-align:left"><b style="margin-left:-0.20px;transform:scaleX(0.895)">g</b></i></span><span style="color:#000000"><i class="c"> </i><i class="c" style="text-align:left"><b style="margin-left:-4.64px;transform:scaleX(0.503)">M</b></i><i class="c">i</i><i class="c">c</i><i class="c">r</i><i class="c" style="text-align:left"><b style="margin-left:-0.20px;transform:scaleX(0.895)">o</b></i><i class="c">s</i><i class="c" style="text-align:left"><b style="margin-left:-0.20px;transform:scaleX(0.895)">o</b></i><i class="c">f</i><i class="c">t</i><i class="c">.</i><i class="c" style="text-align:left"><b style="margin-left:-2.73px;transform:scaleX(0.619)">A</b></i><i class="c">s</i><i class="c" style="text-align:left"><b style="margin-left:-0.20px;transform:scaleX(0.895)">p</b></i><i class="c" style="text-align:left"><b style="margin-left:-2.73px;transform:scaleX(0.619)">N</b></i><i class="c">e</i><i class="c">t</i><i class="c" style="text-align:left"><b style="margin-left:-2.10px;transform:scaleX(0.671)">C</b></i><i class="c" style="text-align:left"><b style="margin-left:-0.20px;transform:scaleX(0.895)">o</b></i><i class="c">r</i><i class="c">e</i><i class="c">.</i><i class="c" style="text-align:left"><b style="margin-left:-4.64px;transform:scaleX(0.503)">M</b></i><i class="c" style="text-align:left"><b style="margin-left:-0.20px;transform:scaleX(0.895)">v</b></i><i class="c">c</i><i class="c">;</i></span></div><div class="code" style="left:109.5px;top:271.65px;color:#2B91AF"><i class="c" style="text-align:left"><b style="margin-left:-0.20px;transform:scaleX(0.895)">3</b></i></div><div class="code" style="left:154.5px;top:271.65px"><span style="color:#0000FF"><i class="c" style="text-align:left"><b style="margin-left:-0.20px;transform:scaleX(0.895)">u</b></i><i class="c">s</i><i class="c">i</i><i class="c" style="text-align:left"><b style="margin-left:-0.20px;transform:scaleX(0.895)">n</b></i><i class="c" style="text-align:left"><b style="margin-left:-0.20px;transform:scaleX(0.895)">g</b></i></span><span style="color:#000000"><i class="c"> </i><i class="c" style="text-align:left"><b style="margin-left:-0.84px;transform:scaleX(0.804)">S</b></i><i class="c" style="text-align:left"><b style="margin-left:-0.84px;transform:scaleX(0.804)">S</b></i><i class="c" style="text-align:left"><b style="margin-left:-2.10px;transform:scaleX(0.671)">C</b></i><i class="c" style="text-align:left"><b style="margin-left:-4.64px;transform:scaleX(0.503)">M</b></i><i class="c" style="text-align:left"><b style="margin-left:-0.84px;transform:scaleX(0.804)">S</b></i><i class="c">.</i><i class="c" style="text-align:left"><b style="margin-left:-2.73px;transform:scaleX(0.619)">D</b></i><i class="c">t</i><i class="c" style="text-align:left"><b style="margin-left:-0.20px;transform:scaleX(0.895)">o</b></i><i class="c">;</i></span></div><div class="code" style="left:109.5px;top:298.90px;color:#2B91AF"><i class="c" style="text-align:left"><b style="margin-left:-0.20px;transform:scaleX(0.895)">4</b></i></div><div class="code" style="left:154.5px;top:298.90px"><span style="color:#0000FF"><i class="c" style="text-align:left"><b style="margin-left:-0.20px;transform:scaleX(0.895)">u</b></i><i class="c">s</i><i class="c">i</i><i class="c" style="text-align:left"><b style="margin-left:-0.20px;transform:scaleX(0.895)">n</b></i><i class="c" style="text-align:left"><b style="margin-left:-0.20px;transform:scaleX(0.895)">g</b></i></span><span style="color:#000000"><i class="c"> </i><i class="c" style="text-align:left"><b style="margin-left:-0.84px;transform:scaleX(0.804)">S</b></i><i class="c" style="text-align:left"><b style="margin-left:-0.84px;transform:scaleX(0.804)">S</b></i><i class="c" style="text-align:left"><b style="margin-left:-2.10px;transform:scaleX(0.671)">C</b></i><i class="c" style="text-align:left"><b style="margin-left:-4.64px;transform:scaleX(0.503)">M</b></i><i class="c" style="text-align:left"><b style="margin-left:-0.84px;transform:scaleX(0.804)">S</b></i><i class="c">.</i><i class="c" style="text-align:left"><b style="margin-left:-2.73px;transform:scaleX(0.619)">H</b></i><i class="c">i</i><i class="c">t</i><i class="c">s</i><i class="c">.</i><i class="c" style="text-align:left"><b style="margin-left:-4.64px;transform:scaleX(0.503)">M</b></i><i class="c" style="text-align:left"><b style="margin-left:-0.20px;transform:scaleX(0.895)">o</b></i><i class="c" style="text-align:left"><b style="margin-left:-0.20px;transform:scaleX(0.895)">d</b></i><i class="c">e</i><i class="c">l</i><i class="c">s</i><i class="c">;</i></span></div><div class="code" style="left:109.5px;top:326.15px;color:#2B91AF"><i class="c" style="text-align:left"><b style="margin-left:-0.20px;transform:scaleX(0.895)">5</b></i></div><div class="code" style="left:109.5px;top:353.40px;color:#2B91AF"><i class="c" style="text-align:left"><b style="margin-left:-0.20px;transform:scaleX(0.895)">6</b></i></div><div class="code" style="left:154.5px;top:353.40px"><span style="color:#0000FF"><i class="c" style="text-align:left"><b style="margin-left:-0.20px;transform:scaleX(0.895)">n</b></i><i class="c">a</i><i class="c" style="text-align:left"><b style="margin-left:-3.37px;transform:scaleX(0.575)">m</b></i><i class="c">e</i><i class="c">s</i><i class="c" style="text-align:left"><b style="margin-left:-0.20px;transform:scaleX(0.895)">p</b></i><i class="c">a</i><i class="c">c</i><i class="c">e</i></span><span style="color:#000000"><i class="c"> </i><i class="c" style="text-align:left"><b style="margin-left:-0.84px;transform:scaleX(0.804)">S</b></i><i class="c" style="text-align:left"><b style="margin-left:-0.84px;transform:scaleX(0.804)">S</b></i><i class="c" style="text-align:left"><b style="margin-left:-2.10px;transform:scaleX(0.671)">C</b></i><i class="c" style="text-align:left"><b style="margin-left:-4.64px;transform:scaleX(0.503)">M</b></i><i class="c" style="text-align:left"><b style="margin-left:-0.84px;transform:scaleX(0.804)">S</b></i><i class="c">.</i><i class="c" style="text-align:left"><b style="margin-left:-2.73px;transform:scaleX(0.619)">H</b></i><i class="c">i</i><i class="c">t</i><i class="c">s</i><i class="c">.</i><i class="c" style="text-align:left"><b style="margin-left:-2.10px;transform:scaleX(0.671)">C</b></i><i class="c" style="text-align:left"><b style="margin-left:-0.20px;transform:scaleX(0.895)">o</b></i><i class="c" style="text-align:left"><b style="margin-left:-0.20px;transform:scaleX(0.895)">n</b></i><i class="c">t</i><i class="c">r</i><i class="c" style="text-align:left"><b style="margin-left:-0.20px;transform:scaleX(0.895)">o</b></i><i class="c">l</i><i class="c">l</i><i class="c">e</i><i class="c">r</i><i class="c">s</i><i class="c">.</i><i class="c" style="text-align:left"><b style="margin-left:-2.73px;transform:scaleX(0.619)">A</b></i><i class="c" style="text-align:left"><b style="margin-left:-0.20px;transform:scaleX(0.895)">d</b></i><i class="c" style="text-align:left"><b style="margin-left:-3.37px;transform:scaleX(0.575)">m</b></i><i class="c">i</i><i class="c" style="text-align:left"><b style="margin-left:-0.20px;transform:scaleX(0.895)">n</b></i></span></div><div class="code" style="left:109.5px;top:380.65px;color:#2B91AF"><i class="c" style="text-align:left"><b style="margin-left:-0.20px;transform:scaleX(0.895)">7</b></i></div><div class="code" style="left:154.5px;top:380.65px"><span style="color:#000000"><i class="c" style="text-align:left"><b style="margin-left:0.03px;transform:scaleX(0.932)">{</b></i></span></div><div class="code" style="left:109.5px;top:432.60px;color:#2B91AF"><i class="c" style="text-align:left"><b style="margin-left:-0.20px;transform:scaleX(0.895)">8</b></i></div><div class="code" style="left:198.5px;top:432.60px"><span style="color:#0000FF"><i class="c" style="text-align:left"><b style="margin-left:-0.20px;transform:scaleX(0.895)">p</b></i><i class="c" style="text-align:left"><b style="margin-left:-0.20px;transform:scaleX(0.895)">u</b></i><i class="c" style="text-align:left"><b style="margin-left:-0.20px;transform:scaleX(0.895)">b</b></i><i class="c">l</i><i class="c">i</i><i class="c">c</i></span><span style="color:#000000"><i class="c"> </i></span><span style="color:#0000FF"><i class="c" style="text-align:left"><b style="margin-left:-0.20px;transform:scaleX(0.895)">p</b></i><i class="c">a</i><i class="c">r</i><i class="c">t</i><i class="c">i</i><i class="c">a</i><i class="c">l</i></span><span style="color:#000000"><i class="c"> </i></span><span style="color:#0000FF"><i class="c">c</i><i class="c">l</i><i class="c">a</i><i class="c">s</i><i class="c">s</i></span><span style="color:#000000"><i class="c"> </i></span><span style="color:#2B91AF"><i class="c" style="text-align:left"><b style="margin-left:-0.84px;transform:scaleX(0.804)">S</b></i><i class="c">e</i><i class="c">t</i><i class="c">t</i><i class="c">i</i><i class="c" style="text-align:left"><b style="margin-left:-0.20px;transform:scaleX(0.895)">n</b></i><i class="c" style="text-align:left"><b style="margin-left:-0.20px;transform:scaleX(0.895)">g</b></i><i class="c">s</i><i class="c" style="text-align:left"><b style="margin-left:-2.10px;transform:scaleX(0.671)">C</b></i><i class="c" style="text-align:left"><b style="margin-left:-0.20px;transform:scaleX(0.895)">o</b></i><i class="c" style="text-align:left"><b style="margin-left:-0.20px;transform:scaleX(0.895)">n</b></i><i class="c">t</i><i class="c">r</i><i class="c" style="text-align:left"><b style="margin-left:-0.20px;transform:scaleX(0.895)">o</b></i><i class="c">l</i><i class="c">l</i><i class="c">e</i><i class="c">r</i></span></div><div class="code" style="left:109.5px;top:459.85px;color:#2B91AF"><i class="c" style="text-align:left"><b style="margin-left:-0.20px;transform:scaleX(0.895)">9</b></i></div><div class="code" style="left:198.5px;top:459.85px"><span style="color:#000000"><i class="c" style="text-align:left"><b style="margin-left:0.03px;transform:scaleX(0.932)">{</b></i></span></div><div class="code" style="left:98.5px;top:487.10px;color:#2B91AF"><i class="c" style="text-align:left"><b style="margin-left:-0.20px;transform:scaleX(0.895)">1</b></i><i class="c" style="text-align:left"><b style="margin-left:-0.20px;transform:scaleX(0.895)">0</b></i></div><div class="code" style="left:242.5px;top:487.10px"><span style="color:#000000"><i class="c">[</i></span><span style="color:#2B91AF"><i class="c" style="text-align:left"><b style="margin-left:-2.73px;transform:scaleX(0.619)">H</b></i><i class="c">t</i><i class="c">t</i><i class="c" style="text-align:left"><b style="margin-left:-0.20px;transform:scaleX(0.895)">p</b></i><i class="c" style="text-align:left"><b style="margin-left:-2.73px;transform:scaleX(0.619)">G</b></i><i class="c">e</i><i class="c">t</i></span><span style="color:#000000"><i class="c">,</i><i class="c"> </i></span><span style="color:#2B91AF"><i class="c" style="text-align:left"><b style="margin-left:-2.10px;transform:scaleX(0.671)">R</b></i><i class="c" style="text-align:left"><b style="margin-left:-0.20px;transform:scaleX(0.895)">o</b></i><i class="c" style="text-align:left"><b style="margin-left:-0.20px;transform:scaleX(0.895)">u</b></i><i class="c">t</i><i class="c">e</i></span><span style="color:#000000"><i class="c">(</i><i class="c" style="text-align:left"><b style="margin-left:-2.10px;transform:scaleX(0.671)">R</b></i><i class="c" style="text-align:left"><b style="margin-left:-0.20px;transform:scaleX(0.895)">o</b></i><i class="c" style="text-align:left"><b style="margin-left:-0.20px;transform:scaleX(0.895)">u</b></i><i class="c">t</i><i class="c">e</i><i class="c">)</i><i class="c">]</i></span></div><div class="code" style="left:98.5px;top:539.05px;color:#2B91AF"><i class="c" style="text-align:left"><b style="margin-left:-0.20px;transform:scaleX(0.895)">1</b></i><i class="c" style="text-align:left"><b style="margin-left:-0.20px;transform:scaleX(0.895)">1</b></i></div><div class="code" style="left:242.5px;top:539.05px"><span style="color:#0000FF"><i class="c" style="text-align:left"><b style="margin-left:-0.20px;transform:scaleX(0.895)">p</b></i><i class="c" style="text-align:left"><b style="margin-left:-0.20px;transform:scaleX(0.895)">u</b></i><i class="c" style="text-align:left"><b style="margin-left:-0.20px;transform:scaleX(0.895)">b</b></i><i class="c">l</i><i class="c">i</i><i class="c">c</i></span><span style="color:#000000"><i class="c"> </i></span><span style="color:#0000FF"><i class="c">a</i><i class="c">s</i><i class="c" style="text-align:left"><b style="margin-left:-0.20px;transform:scaleX(0.895)">y</b></i><i class="c" style="text-align:left"><b style="margin-left:-0.20px;transform:scaleX(0.895)">n</b></i><i class="c">c</i></span><span style="color:#000000"><i class="c"> </i></span><span style="color:#2B91AF"><i class="c" style="text-align:left"><b style="margin-left:-1.46px;transform:scaleX(0.732)">T</b></i><i class="c">a</i><i class="c">s</i><i class="c" style="text-align:left"><b style="margin-left:-0.20px;transform:scaleX(0.895)">k</b></i></span><span style="color:#000000"><i class="c" style="text-align:left"><b style="margin-left:-0.93px;transform:scaleX(0.793)">&lt;</b></i></span><span style="color:#2B91AF"><i class="c" style="text-align:left"><b style="margin-left:-2.73px;transform:scaleX(0.619)">A</b></i><i class="c">c</i><i class="c">t</i><i class="c">i</i><i class="c" style="text-align:left"><b style="margin-left:-0.20px;transform:scaleX(0.895)">o</b></i><i class="c" style="text-align:left"><b style="margin-left:-0.20px;transform:scaleX(0.895)">n</b></i><i class="c" style="text-align:left"><b style="margin-left:-2.10px;transform:scaleX(0.671)">R</b></i><i class="c">e</i><i class="c">s</i><i class="c" style="text-align:left"><b style="margin-left:-0.20px;transform:scaleX(0.895)">u</b></i><i class="c">l</i><i class="c">t</i></span><span style="color:#000000"><i class="c" style="text-align:left"><b style="margin-left:-0.93px;transform:scaleX(0.793)">&lt;</b></i></span><span style="color:#2B91AF"><i class="c" style="text-align:left"><b style="margin-left:-0.84px;transform:scaleX(0.804)">S</b></i><i class="c">e</i><i class="c">t</i><i class="c">t</i><i class="c">i</i><i class="c" style="text-align:left"><b style="margin-left:-0.20px;transform:scaleX(0.895)">n</b></i><i class="c" style="text-align:left"><b style="margin-left:-0.20px;transform:scaleX(0.895)">g</b></i><i class="c">s</i></span><span style="color:#000000"><i class="c" style="text-align:left"><b style="margin-left:-0.93px;transform:scaleX(0.793)">&gt;</b></i><i class="c" style="text-align:left"><b style="margin-left:-0.93px;transform:scaleX(0.793)">&gt;</b></i><i class="c"> </i><i class="c" style="text-align:left"><b style="margin-left:-2.73px;transform:scaleX(0.619)">G</b></i><i class="c">e</i><i class="c">t</i><i class="c">(</i><i class="c">[</i></span><span style="color:#2B91AF"><i class="c" style="text-align:left"><b style="margin-left:-0.84px;transform:scaleX(0.804)">F</b></i><i class="c">r</i><i class="c" style="text-align:left"><b style="margin-left:-0.20px;transform:scaleX(0.895)">o</b></i><i class="c" style="text-align:left"><b style="margin-left:-3.37px;transform:scaleX(0.575)">m</b></i><i class="c" style="text-align:left"><b style="margin-left:-2.73px;transform:scaleX(0.619)">Q</b></i><i class="c" style="text-align:left"><b style="margin-left:-0.20px;transform:scaleX(0.895)">u</b></i><i class="c">e</i><i class="c">r</i><i class="c" style="text-align:left"><b style="margin-left:-0.20px;transform:scaleX(0.895)">y</b></i></span><span style="color:#000000"><i class="c">]</i><i class="c"> </i></span><span style="color:#2B91AF"><i class="c" style="text-align:left"><b style="margin-left:-0.84px;transform:scaleX(0.804)">S</b></i><i class="c">i</i><i class="c">t</i><i class="c">e</i><i class="c" style="text-align:left"><b style="margin-left:-2.10px;transform:scaleX(0.671)">R</b></i><i class="c">e</i><i class="c" style="text-align:left"><b style="margin-left:-0.20px;transform:scaleX(0.895)">q</b></i><i class="c" style="text-align:left"><b style="margin-left:-0.20px;transform:scaleX(0.895)">u</b></i><i class="c">e</i><i class="c">s</i><i class="c">t</i></span><span style="color:#000000"><i class="c"> </i><i class="c">r</i><i class="c">e</i><i class="c" style="text-align:left"><b style="margin-left:-0.20px;transform:scaleX(0.895)">q</b></i><i class="c" style="text-align:left"><b style="margin-left:-0.20px;transform:scaleX(0.895)">u</b></i><i class="c">e</i><i class="c">s</i><i class="c">t</i><i class="c">)</i></span></div><div class="code" style="left:98.5px;top:566.30px;color:#2B91AF"><i class="c" style="text-align:left"><b style="margin-left:-0.20px;transform:scaleX(0.895)">1</b></i><i class="c" style="text-align:left"><b style="margin-left:-0.20px;transform:scaleX(0.895)">2</b></i></div><div class="code" style="left:242.5px;top:566.30px"><span style="color:#000000"><i class="c" style="text-align:left"><b style="margin-left:0.03px;transform:scaleX(0.932)">{</b></i></span></div><div class="code" style="left:98.5px;top:593.55px;color:#2B91AF"><i class="c" style="text-align:left"><b style="margin-left:-0.20px;transform:scaleX(0.895)">1</b></i><i class="c" style="text-align:left"><b style="margin-left:-0.20px;transform:scaleX(0.895)">3</b></i></div><div class="code" style="left:286.5px;top:593.55px"><span style="color:#0000FF"><i class="c">i</i><i class="c">f</i></span><span style="color:#000000"><i class="c"> </i><i class="c">(</i><i class="c">!</i></span><span style="color:#0000FF"><i class="c">a</i><i class="c" style="text-align:left"><b style="margin-left:-2.73px;transform:scaleX(0.619)">w</b></i><i class="c">a</i><i class="c">i</i><i class="c">t</i></span><span style="color:#000000"><i class="c"> </i><i class="c" style="text-align:left"><b style="margin-left:-0.20px;transform:scaleX(0.895)">_</b></i><i class="c">a</i><i class="c" style="text-align:left"><b style="margin-left:-0.20px;transform:scaleX(0.895)">u</b></i><i class="c">t</i><i class="c" style="text-align:left"><b style="margin-left:-0.20px;transform:scaleX(0.895)">h</b></i><i class="c" style="text-align:left"><b style="margin-left:-4.64px;transform:scaleX(0.503)">M</b></i><i class="c">a</i><i class="c" style="text-align:left"><b style="margin-left:-0.20px;transform:scaleX(0.895)">n</b></i><i class="c">a</i><i class="c" style="text-align:left"><b style="margin-left:-0.20px;transform:scaleX(0.895)">g</b></i><i class="c">e</i><i class="c">r</i><i class="c">.</i><i class="c" style="text-align:left"><b style="margin-left:-2.73px;transform:scaleX(0.619)">H</b></i><i class="c">a</i><i class="c">s</i><i class="c" style="text-align:left"><b style="margin-left:-0.84px;transform:scaleX(0.804)">S</b></i><i class="c">i</i><i class="c">t</i><i class="c">e</i><i class="c" style="text-align:left"><b style="margin-left:-0.84px;transform:scaleX(0.804)">P</b></i><i class="c">e</i><i class="c">r</i><i class="c" style="text-align:left"><b style="margin-left:-3.37px;transform:scaleX(0.575)">m</b></i><i class="c">i</i><i class="c">s</i><i class="c">s</i><i class="c">i</i><i class="c" style="text-align:left"><b style="margin-left:-0.20px;transform:scaleX(0.895)">o</b></i><i class="c" style="text-align:left"><b style="margin-left:-0.20px;transform:scaleX(0.895)">n</b></i><i class="c">s</i><i class="c" style="text-align:left"><b style="margin-left:-2.73px;transform:scaleX(0.619)">A</b></i><i class="c">s</i><i class="c" style="text-align:left"><b style="margin-left:-0.20px;transform:scaleX(0.895)">y</b></i><i class="c" style="text-align:left"><b style="margin-left:-0.20px;transform:scaleX(0.895)">n</b></i><i class="c">c</i><i class="c">(</i><i class="c">r</i><i class="c">e</i><i class="c" style="text-align:left"><b style="margin-left:-0.20px;transform:scaleX(0.895)">q</b></i><i class="c" style="text-align:left"><b style="margin-left:-0.20px;transform:scaleX(0.895)">u</b></i><i class="c">e</i><i class="c">s</i><i class="c">t</i><i class="c">.</i><i class="c" style="text-align:left"><b style="margin-left:-0.84px;transform:scaleX(0.804)">S</b></i><i class="c">i</i><i class="c">t</i><i class="c">e</i><i class="c">I</i><i class="c" style="text-align:left"><b style="margin-left:-0.20px;transform:scaleX(0.895)">d</b></i><i class="c">,</i><i class="c"> </i></span><span style="color:#A31515"><i class="c"><b style="transform:skewX(-28deg) scaleX(0.8)">&quot;</b></i><i class="c">s</i><i class="c">i</i><i class="c">t</i><i class="c">e</i><i class="c" style="text-align:left"><b style="margin-left:-0.20px;transform:scaleX(0.895)">_</b></i><i class="c" style="text-align:left"><b style="margin-left:-0.20px;transform:scaleX(0.895)">h</b></i><i class="c">i</i><i class="c">t</i><i class="c">s</i><i class="c"><b style="transform:skewX(-28deg) scaleX(0.8)">&quot;</b></i></span><span style="color:#000000"><i class="c">)</i><i class="c">)</i></span></div><div class="code" style="left:98.5px;top:620.80px;color:#2B91AF"><i class="c" style="text-align:left"><b style="margin-left:-0.20px;transform:scaleX(0.895)">1</b></i><i class="c" style="text-align:left"><b style="margin-left:-0.20px;transform:scaleX(0.895)">4</b></i></div><div class="code" style="left:286.5px;top:620.80px"><span style="color:#000000"><i class="c" style="text-align:left"><b style="margin-left:0.03px;transform:scaleX(0.932)">{</b></i></span></div><div class="code" style="left:98.5px;top:648.05px;color:#2B91AF"><i class="c" style="text-align:left"><b style="margin-left:-0.20px;transform:scaleX(0.895)">1</b></i><i class="c" style="text-align:left"><b style="margin-left:-0.20px;transform:scaleX(0.895)">5</b></i></div><div class="code" style="left:330.5px;top:648.05px"><span style="color:#0000FF"><i class="c">r</i><i class="c">e</i><i class="c">t</i><i class="c" style="text-align:left"><b style="margin-left:-0.20px;transform:scaleX(0.895)">u</b></i><i class="c">r</i><i class="c" style="text-align:left"><b style="margin-left:-0.20px;transform:scaleX(0.895)">n</b></i></span><span style="color:#000000"><i class="c"> </i><i class="c" style="text-align:left"><b style="margin-left:-2.73px;transform:scaleX(0.619)">U</b></i><i class="c" style="text-align:left"><b style="margin-left:-0.20px;transform:scaleX(0.895)">n</b></i><i class="c">a</i><i class="c" style="text-align:left"><b style="margin-left:-0.20px;transform:scaleX(0.895)">u</b></i><i class="c">t</i><i class="c" style="text-align:left"><b style="margin-left:-0.20px;transform:scaleX(0.895)">h</b></i><i class="c" style="text-align:left"><b style="margin-left:-0.20px;transform:scaleX(0.895)">o</b></i><i class="c">r</i><i class="c">i</i><i class="c">z</i><i class="c">e</i><i class="c" style="text-align:left"><b style="margin-left:-0.20px;transform:scaleX(0.895)">d</b></i><i class="c">(</i><i class="c">)</i><i class="c">;</i></span></div><div class="code" style="left:98.5px;top:675.30px;color:#2B91AF"><i class="c" style="text-align:left"><b style="margin-left:-0.20px;transform:scaleX(0.895)">1</b></i><i class="c" style="text-align:left"><b style="margin-left:-0.20px;transform:scaleX(0.895)">6</b></i></div><div class="code" style="left:286.5px;top:675.30px"><span style="color:#000000"><i class="c" style="text-align:left"><b style="margin-left:0.03px;transform:scaleX(0.932)">}</b></i></span></div><div class="code" style="left:98.5px;top:702.55px;color:#2B91AF"><i class="c" style="text-align:left"><b style="margin-left:-0.20px;transform:scaleX(0.895)">1</b></i><i class="c" style="text-align:left"><b style="margin-left:-0.20px;transform:scaleX(0.895)">7</b></i></div><div class="code" style="left:98.5px;top:729.80px;color:#2B91AF"><i class="c" style="text-align:left"><b style="margin-left:-0.20px;transform:scaleX(0.895)">1</b></i><i class="c" style="text-align:left"><b style="margin-left:-0.20px;transform:scaleX(0.895)">8</b></i></div><div class="code" style="left:286.5px;top:729.80px"><span style="color:#000000"><i class="c" style="text-align:left"><b style="margin-left:-0.20px;transform:scaleX(0.895)">v</b></i><i class="c">a</i><i class="c">r</i><i class="c"> </i><i class="c">s</i><i class="c">e</i><i class="c">t</i><i class="c">t</i><i class="c">i</i><i class="c" style="text-align:left"><b style="margin-left:-0.20px;transform:scaleX(0.895)">n</b></i><i class="c" style="text-align:left"><b style="margin-left:-0.20px;transform:scaleX(0.895)">g</b></i><i class="c">s</i><i class="c"> </i><i class="c" style="text-align:left"><b style="margin-left:-0.93px;transform:scaleX(0.793)">=</b></i><i class="c"> </i><i class="c">a</i><i class="c" style="text-align:left"><b style="margin-left:-2.73px;transform:scaleX(0.619)">w</b></i><i class="c">a</i><i class="c">i</i><i class="c">t</i><i class="c"> </i><i class="c" style="text-align:left"><b style="margin-left:-0.20px;transform:scaleX(0.895)">_</b></i><i class="c" style="text-align:left"><b style="margin-left:-0.20px;transform:scaleX(0.895)">h</b></i><i class="c">i</i><i class="c">t</i><i class="c">s</i><i class="c" style="text-align:left"><b style="margin-left:-4.64px;transform:scaleX(0.503)">M</b></i><i class="c">a</i><i class="c" style="text-align:left"><b style="margin-left:-0.20px;transform:scaleX(0.895)">n</b></i><i class="c">a</i><i class="c" style="text-align:left"><b style="margin-left:-0.20px;transform:scaleX(0.895)">g</b></i><i class="c">e</i><i class="c">r</i><i class="c">.</i><i class="c" style="text-align:left"><b style="margin-left:-2.73px;transform:scaleX(0.619)">G</b></i><i class="c">e</i><i class="c">t</i><i class="c" style="text-align:left"><b style="margin-left:-0.84px;transform:scaleX(0.804)">S</b></i><i class="c">e</i><i class="c">t</i><i class="c">t</i><i class="c">i</i><i class="c" style="text-align:left"><b style="margin-left:-0.20px;transform:scaleX(0.895)">n</b></i><i class="c" style="text-align:left"><b style="margin-left:-0.20px;transform:scaleX(0.895)">g</b></i><i class="c">s</i><i class="c" style="text-align:left"><b style="margin-left:-2.73px;transform:scaleX(0.619)">A</b></i><i class="c">s</i><i class="c" style="text-align:left"><b style="margin-left:-0.20px;transform:scaleX(0.895)">y</b></i><i class="c" style="text-align:left"><b style="margin-left:-0.20px;transform:scaleX(0.895)">n</b></i><i class="c">c</i><i class="c">(</i><i class="c">r</i><i class="c">e</i><i class="c" style="text-align:left"><b style="margin-left:-0.20px;transform:scaleX(0.895)">q</b></i><i class="c" style="text-align:left"><b style="margin-left:-0.20px;transform:scaleX(0.895)">u</b></i><i class="c">e</i><i class="c">s</i><i class="c">t</i><i class="c">.</i><i class="c" style="text-align:left"><b style="margin-left:-0.84px;transform:scaleX(0.804)">S</b></i><i class="c">i</i><i class="c">t</i><i class="c">e</i><i class="c">I</i><i class="c" style="text-align:left"><b style="margin-left:-0.20px;transform:scaleX(0.895)">d</b></i><i class="c">)</i><i class="c">;</i></span></div><div class="code" style="left:98.5px;top:757.05px;color:#2B91AF"><i class="c" style="text-align:left"><b style="margin-left:-0.20px;transform:scaleX(0.895)">1</b></i><i class="c" style="text-align:left"><b style="margin-left:-0.20px;transform:scaleX(0.895)">9</b></i></div><div class="code" style="left:98.5px;top:784.30px;color:#2B91AF"><i class="c" style="text-align:left"><b style="margin-left:-0.20px;transform:scaleX(0.895)">2</b></i><i class="c" style="text-align:left"><b style="margin-left:-0.20px;transform:scaleX(0.895)">0</b></i></div><div class="code" style="left:286.5px;top:784.30px"><span style="color:#0000FF"><i class="c">r</i><i class="c">e</i><i class="c">t</i><i class="c" style="text-align:left"><b style="margin-left:-0.20px;transform:scaleX(0.895)">u</b></i><i class="c">r</i><i class="c" style="text-align:left"><b style="margin-left:-0.20px;transform:scaleX(0.895)">n</b></i></span><span style="color:#000000"><i class="c"> </i><i class="c">s</i><i class="c">e</i><i class="c">t</i><i class="c">t</i><i class="c">i</i><i class="c" style="text-align:left"><b style="margin-left:-0.20px;transform:scaleX(0.895)">n</b></i><i class="c" style="text-align:left"><b style="margin-left:-0.20px;transform:scaleX(0.895)">g</b></i><i class="c">s</i><i class="c">;</i></span></div><div class="code" style="left:98.5px;top:811.55px;color:#2B91AF"><i class="c" style="text-align:left"><b style="margin-left:-0.20px;transform:scaleX(0.895)">2</b></i><i class="c" style="text-align:left"><b style="margin-left:-0.20px;transform:scaleX(0.895)">1</b></i></div><div class="code" style="left:242.5px;top:811.55px"><span style="color:#000000"><i class="c" style="text-align:left"><b style="margin-left:0.03px;transform:scaleX(0.932)">}</b></i></span></div><div class="code" style="left:98.5px;top:838.80px;color:#2B91AF"><i class="c" style="text-align:left"><b style="margin-left:-0.20px;transform:scaleX(0.895)">2</b></i><i class="c" style="text-align:left"><b style="margin-left:-0.20px;transform:scaleX(0.895)">2</b></i></div><div class="code" style="left:198.5px;top:838.80px"><span style="color:#000000"><i class="c" style="text-align:left"><b style="margin-left:0.03px;transform:scaleX(0.932)">}</b></i></span></div><div class="code" style="left:98.5px;top:866.05px;color:#2B91AF"><i class="c" style="text-align:left"><b style="margin-left:-0.20px;transform:scaleX(0.895)">2</b></i><i class="c" style="text-align:left"><b style="margin-left:-0.20px;transform:scaleX(0.895)">3</b></i></div><div class="code" style="left:154.5px;top:866.05px"><span style="color:#000000"><i class="c" style="text-align:left"><b style="margin-left:0.03px;transform:scaleX(0.932)">}</b></i></span></div><div class="code" style="left:98.5px;top:893.30px;color:#2B91AF"><i class="c" style="text-align:left"><b style="margin-left:-0.20px;transform:scaleX(0.895)">2</b></i><i class="c" style="text-align:left"><b style="margin-left:-0.20px;transform:scaleX(0.895)">4</b></i></div><div class="code" style="left:198.5px;top:407.40px;color:#999"><i class="c" style="text-align:left"><b style="margin-left:-0.20px;transform:scaleX(0.895)">3</b></i></div><div class="t" style="left:220.5px;top:409.20px;font-size:20px;line-height:22px;letter-spacing:2px;color:#999">个引用</div><div class="code" style="left:242.5px;top:513.85px;color:#999"><i class="c" style="text-align:left"><b style="margin-left:-0.20px;transform:scaleX(0.895)">0</b></i></div><div class="t" style="left:264.5px;top:515.65px;font-size:20px;line-height:22px;letter-spacing:2px;color:#999">个引用</div><svg style="left:15px;top:731.5px;" width="21" height="21" viewBox="0 0 21 21"><circle cx="10.5" cy="10.5" r="9.8" fill="#E51400"/><path d="M2.8 6.5 H9.5 V2.6 L18.3 10.5 L9.5 18.4 V14.5 H2.8 Z" fill="#FFD21F" stroke="#3A2A10" stroke-width="1.3" stroke-linejoin="miter"/></svg><svg style="left:41px;top:730px;" width="24" height="24" viewBox="0 0 24 24"><path d="M0.2 9.8 L3.7 13.5 L10.8 7.2 L7.3 3.5 Z" fill="#2A2A2A"/><path d="M6.2 4.6 Q9 1.2 13.8 1.3 Q10.8 3.3 10.2 7" fill="#2A2A2A"/><path d="M10.6 11.3 L19.9 20.4" stroke="#2A2A2A" stroke-width="3.4" stroke-linecap="round"/></svg><svg style="left:211px;top:817.6px;" width="16" height="14" viewBox="0 0 16 14"><path d="M0 0 L10 7 L0 14 Z" fill="#5CAE5A"/><rect x="13" y="1" width="2.2" height="12.5" fill="#5CAE5A"/></svg><div style="left:1578px;top:217.6px;width:40px;height:999.3px;background:#F5F5F5"></div><svg style="left:1589px;top:220.3px;" width="17" height="17" viewBox="0 0 17 17"><rect width="16.5" height="16.5" fill="#2E9B39"/><path d="M5 8.5 Q6.5 9.5 7.8 12.3 Q9.5 7 12.8 3.2" stroke="#fff" stroke-width="2.3" fill="none"/></svg><svg style="left:1591px;top:249.8px;" width="14" height="7" viewBox="0 0 14 7"><path d="M0 7 L7 0 L14 7 Z" fill="#868999"/></svg><div style="left:1584px;top:267px;width:28px;height:480px;background:#C2C3C9"></div><div style="left:1578px;top:480.5px;width:40px;height:3.2px;background:#0000F0"></div><div style="left:1587px;top:478px;width:7px;height:9px;background:#993344"></div><div style="left:1578px;top:480.5px;width:40px;height:3.2px;background:linear-gradient(to right,#0000F0 0,#0000F0 9px,#0000F0 16px,#0000F0 100%)"></div><svg style="left:1591px;top:1200.2px;" width="14" height="8" viewBox="0 0 14 8"><path d="M0 0 L7 8 L14 0 Z" fill="#868999"/></svg><div style="left:11.7px;top:1216.9px;width:1606.5px;height:26px;background:#F5F5F5"></div><div style="left:11.7px;top:1217.5px;width:89px;height:25.3px;background:#fff;border:1.5px solid #CCCEDB;border-right:2px solid #CCCEDB;box-sizing:border-box"></div><div class="t" style="left:14.5px;top:1221.79px;font-size:17.5px;line-height:17.5px;color:#1E1E1E;">113 %</div><svg style="left:88.5px;top:1228.5px;" width="9" height="5" viewBox="0 0 9 5"><path d="M0 0 H9 L4.5 5 Z" fill="#717171"/></svg><svg style="left:136px;top:1221px;" width="18" height="18" viewBox="0 0 18 18"><circle cx="9" cy="9" r="9" fill="#2E9B39"/><path d="M4.5 9.2 L7.7 12.4 L13.5 6" stroke="#fff" stroke-width="2.4" fill="none"/></svg><div class="t" style="left:161px;top:1222.21px;font-size:17px;line-height:17px;color:#1E1E1E;">未找到相关问题</div><div style="left:377px;top:1220px;width:2px;height:20px;background:#A0A0A0"></div><svg style="left:400px;top:1220px;" width="19" height="19" viewBox="0 0 19 19"><path d="M14 1 L11 5" stroke="#424242" stroke-width="1.6"/><path d="M9 4 L15 10 L8 17 L2 11 Z" fill="none" stroke="#424242" stroke-width="1.8"/><path d="M9 4 L15 10 L12 13 L6 7 Z" fill="#424242"/></svg><svg style="left:425px;top:1227px;" width="10.5" height="5" viewBox="0 0 10.5 5"><path d="M0 0 H10.5 L5.25 5 Z" fill="#1E1E1E"/></svg><div class="t" style="left:1335px;top:1222.41px;font-size:17px;line-height:17px;color:#1E1E1E;">行: 18</div><div class="t" style="left:1408px;top:1222.41px;font-size:17px;line-height:17px;color:#1E1E1E;">字符: 13</div><div class="t" style="left:1499px;top:1222.41px;font-size:17px;line-height:17px;color:#1E1E1E;">空格</div><div class="t" style="left:1563.3px;top:1221.99px;font-size:17.5px;line-height:17.5px;color:#1E1E1E;letter-spacing:-2.066px;">CRLF</div><div style="left:1629px;top:152px;width:523px;height:1062.6px;background:#CCCEDB"></div><div style="left:1631px;top:154px;width:518.5px;height:1058.8px;background:#EEEEF2"></div><div class="t" style="left:1637px;top:161.64px;font-size:18.5px;line-height:18.5px;color:#444444;letter-spacing:-0.500px;">诊断工具</div><svg style="left:1720px;top:166px;" width="341" height="8.5" viewBox="0 0 341 8.5"><rect x="1.2" y="0.6" width="1.4" height="1.4" fill="#9C9C9C"/><rect x="4.2" y="3.6" width="1.4" height="1.4" fill="#9C9C9C"/><rect x="1.2" y="6.6" width="1.4" height="1.4" fill="#9C9C9C"/><rect x="7.2" y="0.6" width="1.4" height="1.4" fill="#9C9C9C"/><rect x="10.2" y="3.6" width="1.4" height="1.4" fill="#9C9C9C"/><rect x="7.2" y="6.6" width="1.4" height="1.4" fill="#9C9C9C"/><rect x="13.2" y="0.6" width="1.4" height="1.4" fill="#9C9C9C"/><rect x="16.2" y="3.6" width="1.4" height="1.4" fill="#9C9C9C"/><rect x="13.2" y="6.6" width="1.4" height="1.4" fill="#9C9C9C"/><rect x="19.2" y="0.6" width="1.4" height="1.4" fill="#9C9C9C"/><rect x="22.2" y="3.6" width="1.4" height="1.4" fill="#9C9C9C"/><rect x="19.2" y="6.6" width="1.4" height="1.4" fill="#9C9C9C"/><rect x="25.2" y="0.6" width="1.4" height="1.4" fill="#9C9C9C"/><rect x="28.2" y="3.6" width="1.4" height="1.4" fill="#9C9C9C"/><rect x="25.2" y="6.6" width="1.4" height="1.4" fill="#9C9C9C"/><rect x="31.2" y="0.6" width="1.4" height="1.4" fill="#9C9C9C"/><rect x="34.2" y="3.6" width="1.4" height="1.4" fill="#9C9C9C"/><rect x="31.2" y="6.6" width="1.4" height="1.4" fill="#9C9C9C"/><rect x="37.2" y="0.6" width="1.4" height="1.4" fill="#9C9C9C"/><rect x="40.2" y="3.6" width="1.4" height="1.4" fill="#9C9C9C"/><rect x="37.2" y="6.6" width="1.4" height="1.4" fill="#9C9C9C"/><rect x="43.2" y="0.6" width="1.4" height="1.4" fill="#9C9C9C"/><rect x="46.2" y="3.6" width="1.4" height="1.4" fill="#9C9C9C"/><rect x="43.2" y="6.6" width="1.4" height="1.4" fill="#9C9C9C"/><rect x="49.2" y="0.6" width="1.4" height="1.4" fill="#9C9C9C"/><rect x="52.2" y="3.6" width="1.4" height="1.4" fill="#9C9C9C"/><rect x="49.2" y="6.6" width="1.4" height="1.4" fill="#9C9C9C"/><rect x="55.2" y="0.6" width="1.4" height="1.4" fill="#9C9C9C"/><rect x="58.2" y="3.6" width="1.4" height="1.4" fill="#9C9C9C"/><rect x="55.2" y="6.6" width="1.4" height="1.4" fill="#9C9C9C"/><rect x="61.2" y="0.6" width="1.4" height="1.4" fill="#9C9C9C"/><rect x="64.2" y="3.6" width="1.4" height="1.4" fill="#9C9C9C"/><rect x="61.2" y="6.6" width="1.4" height="1.4" fill="#9C9C9C"/><rect x="67.2" y="0.6" width="1.4" height="1.4" fill="#9C9C9C"/><rect x="70.2" y="3.6" width="1.4" height="1.4" fill="#9C9C9C"/><rect x="67.2" y="6.6" width="1.4" height="1.4" fill="#9C9C9C"/><rect x="73.2" y="0.6" width="1.4" height="1.4" fill="#9C9C9C"/><rect x="76.2" y="3.6" width="1.4" height="1.4" fill="#9C9C9C"/><rect x="73.2" y="6.6" width="1.4" height="1.4" fill="#9C9C9C"/><rect x="79.2" y="0.6" width="1.4" height="1.4" fill="#9C9C9C"/><rect x="82.2" y="3.6" width="1.4" height="1.4" fill="#9C9C9C"/><rect x="79.2" y="6.6" width="1.4" height="1.4" fill="#9C9C9C"/><rect x="85.2" y="0.6" width="1.4" height="1.4" fill="#9C9C9C"/><rect x="88.2" y="3.6" width="1.4" height="1.4" fill="#9C9C9C"/><rect x="85.2" y="6.6" width="1.4" height="1.4" fill="#9C9C9C"/><rect x="91.2" y="0.6" width="1.4" height="1.4" fill="#9C9C9C"/><rect x="94.2" y="3.6" width="1.4" height="1.4" fill="#9C9C9C"/><rect x="91.2" y="6.6" width="1.4" height="1.4" fill="#9C9C9C"/><rect x="97.2" y="0.6" width="1.4" height="1.4" fill="#9C9C9C"/><rect x="100.2" y="3.6" width="1.4" height="1.4" fill="#9C9C9C"/><rect x="97.2" y="6.6" width="1.4" height="1.4" fill="#9C9C9C"/><rect x="103.2" y="0.6" width="1.4" height="1.4" fill="#9C9C9C"/><rect x="106.2" y="3.6" width="1.4" height="1.4" fill="#9C9C9C"/><rect x="103.2" y="6.6" width="1.4" height="1.4" fill="#9C9C9C"/><rect x="109.2" y="0.6" width="1.4" height="1.4" fill="#9C9C9C"/><rect x="112.2" y="3.6" width="1.4" height="1.4" fill="#9C9C9C"/><rect x="109.2" y="6.6" width="1.4" height="1.4" fill="#9C9C9C"/><rect x="115.2" y="0.6" width="1.4" height="1.4" fill="#9C9C9C"/><rect x="118.2" y="3.6" width="1.4" height="1.4" fill="#9C9C9C"/><rect x="115.2" y="6.6" width="1.4" height="1.4" fill="#9C9C9C"/><rect x="121.2" y="0.6" width="1.4" height="1.4" fill="#9C9C9C"/><rect x="124.2" y="3.6" width="1.4" height="1.4" fill="#9C9C9C"/><rect x="121.2" y="6.6" width="1.4" height="1.4" fill="#9C9C9C"/><rect x="127.2" y="0.6" width="1.4" height="1.4" fill="#9C9C9C"/><rect x="130.2" y="3.6" width="1.4" height="1.4" fill="#9C9C9C"/><rect x="127.2" y="6.6" width="1.4" height="1.4" fill="#9C9C9C"/><rect x="133.2" y="0.6" width="1.4" height="1.4" fill="#9C9C9C"/><rect x="136.2" y="3.6" width="1.4" height="1.4" fill="#9C9C9C"/><rect x="133.2" y="6.6" width="1.4" height="1.4" fill="#9C9C9C"/><rect x="139.2" y="0.6" width="1.4" height="1.4" fill="#9C9C9C"/><rect x="142.2" y="3.6" width="1.4" height="1.4" fill="#9C9C9C"/><rect x="139.2" y="6.6" width="1.4" height="1.4" fill="#9C9C9C"/><rect x="145.2" y="0.6" width="1.4" height="1.4" fill="#9C9C9C"/><rect x="148.2" y="3.6" width="1.4" height="1.4" fill="#9C9C9C"/><rect x="145.2" y="6.6" width="1.4" height="1.4" fill="#9C9C9C"/><rect x="151.2" y="0.6" width="1.4" height="1.4" fill="#9C9C9C"/><rect x="154.2" y="3.6" width="1.4" height="1.4" fill="#9C9C9C"/><rect x="151.2" y="6.6" width="1.4" height="1.4" fill="#9C9C9C"/><rect x="157.2" y="0.6" width="1.4" height="1.4" fill="#9C9C9C"/><rect x="160.2" y="3.6" width="1.4" height="1.4" fill="#9C9C9C"/><rect x="157.2" y="6.6" width="1.4" height="1.4" fill="#9C9C9C"/><rect x="163.2" y="0.6" width="1.4" height="1.4" fill="#9C9C9C"/><rect x="166.2" y="3.6" width="1.4" height="1.4" fill="#9C9C9C"/><rect x="163.2" y="6.6" width="1.4" height="1.4" fill="#9C9C9C"/><rect x="169.2" y="0.6" width="1.4" height="1.4" fill="#9C9C9C"/><rect x="172.2" y="3.6" width="1.4" height="1.4" fill="#9C9C9C"/><rect x="169.2" y="6.6" width="1.4" height="1.4" fill="#9C9C9C"/><rect x="175.2" y="0.6" width="1.4" height="1.4" fill="#9C9C9C"/><rect x="178.2" y="3.6" width="1.4" height="1.4" fill="#9C9C9C"/><rect x="175.2" y="6.6" width="1.4" height="1.4" fill="#9C9C9C"/><rect x="181.2" y="0.6" width="1.4" height="1.4" fill="#9C9C9C"/><rect x="184.2" y="3.6" width="1.4" height="1.4" fill="#9C9C9C"/><rect x="181.2" y="6.6" width="1.4" height="1.4" fill="#9C9C9C"/><rect x="187.2" y="0.6" width="1.4" height="1.4" fill="#9C9C9C"/><rect x="190.2" y="3.6" width="1.4" height="1.4" fill="#9C9C9C"/><rect x="187.2" y="6.6" width="1.4" height="1.4" fill="#9C9C9C"/><rect x="193.2" y="0.6" width="1.4" height="1.4" fill="#9C9C9C"/><rect x="196.2" y="3.6" width="1.4" height="1.4" fill="#9C9C9C"/><rect x="193.2" y="6.6" width="1.4" height="1.4" fill="#9C9C9C"/><rect x="199.2" y="0.6" width="1.4" height="1.4" fill="#9C9C9C"/><rect x="202.2" y="3.6" width="1.4" height="1.4" fill="#9C9C9C"/><rect x="199.2" y="6.6" width="1.4" height="1.4" fill="#9C9C9C"/><rect x="205.2" y="0.6" width="1.4" height="1.4" fill="#9C9C9C"/><rect x="208.2" y="3.6" width="1.4" height="1.4" fill="#9C9C9C"/><rect x="205.2" y="6.6" width="1.4" height="1.4" fill="#9C9C9C"/><rect x="211.2" y="0.6" width="1.4" height="1.4" fill="#9C9C9C"/><rect x="214.2" y="3.6" width="1.4" height="1.4" fill="#9C9C9C"/><rect x="211.2" y="6.6" width="1.4" height="1.4" fill="#9C9C9C"/><rect x="217.2" y="0.6" width="1.4" height="1.4" fill="#9C9C9C"/><rect x="220.2" y="3.6" width="1.4" height="1.4" fill="#9C9C9C"/><rect x="217.2" y="6.6" width="1.4" height="1.4" fill="#9C9C9C"/><rect x="223.2" y="0.6" width="1.4" height="1.4" fill="#9C9C9C"/><rect x="226.2" y="3.6" width="1.4" height="1.4" fill="#9C9C9C"/><rect x="223.2" y="6.6" width="1.4" height="1.4" fill="#9C9C9C"/><rect x="229.2" y="0.6" width="1.4" height="1.4" fill="#9C9C9C"/><rect x="232.2" y="3.6" width="1.4" height="1.4" fill="#9C9C9C"/><rect x="229.2" y="6.6" width="1.4" height="1.4" fill="#9C9C9C"/><rect x="235.2" y="0.6" width="1.4" height="1.4" fill="#9C9C9C"/><rect x="238.2" y="3.6" width="1.4" height="1.4" fill="#9C9C9C"/><rect x="235.2" y="6.6" width="1.4" height="1.4" fill="#9C9C9C"/><rect x="241.2" y="0.6" width="1.4" height="1.4" fill="#9C9C9C"/><rect x="244.2" y="3.6" width="1.4" height="1.4" fill="#9C9C9C"/><rect x="241.2" y="6.6" width="1.4" height="1.4" fill="#9C9C9C"/><rect x="247.2" y="0.6" width="1.4" height="1.4" fill="#9C9C9C"/><rect x="250.2" y="3.6" width="1.4" height="1.4" fill="#9C9C9C"/><rect x="247.2" y="6.6" width="1.4" height="1.4" fill="#9C9C9C"/><rect x="253.2" y="0.6" width="1.4" height="1.4" fill="#9C9C9C"/><rect x="256.2" y="3.6" width="1.4" height="1.4" fill="#9C9C9C"/><rect x="253.2" y="6.6" width="1.4" height="1.4" fill="#9C9C9C"/><rect x="259.2" y="0.6" width="1.4" height="1.4" fill="#9C9C9C"/><rect x="262.2" y="3.6" width="1.4" height="1.4" fill="#9C9C9C"/><rect x="259.2" y="6.6" width="1.4" height="1.4" fill="#9C9C9C"/><rect x="265.2" y="0.6" width="1.4" height="1.4" fill="#9C9C9C"/><rect x="268.2" y="3.6" width="1.4" height="1.4" fill="#9C9C9C"/><rect x="265.2" y="6.6" width="1.4" height="1.4" fill="#9C9C9C"/><rect x="271.2" y="0.6" width="1.4" height="1.4" fill="#9C9C9C"/><rect x="274.2" y="3.6" width="1.4" height="1.4" fill="#9C9C9C"/><rect x="271.2" y="6.6" width="1.4" height="1.4" fill="#9C9C9C"/><rect x="277.2" y="0.6" width="1.4" height="1.4" fill="#9C9C9C"/><rect x="280.2" y="3.6" width="1.4" height="1.4" fill="#9C9C9C"/><rect x="277.2" y="6.6" width="1.4" height="1.4" fill="#9C9C9C"/><rect x="283.2" y="0.6" width="1.4" height="1.4" fill="#9C9C9C"/><rect x="286.2" y="3.6" width="1.4" height="1.4" fill="#9C9C9C"/><rect x="283.2" y="6.6" width="1.4" height="1.4" fill="#9C9C9C"/><rect x="289.2" y="0.6" width="1.4" height="1.4" fill="#9C9C9C"/><rect x="292.2" y="3.6" width="1.4" height="1.4" fill="#9C9C9C"/><rect x="289.2" y="6.6" width="1.4" height="1.4" fill="#9C9C9C"/><rect x="295.2" y="0.6" width="1.4" height="1.4" fill="#9C9C9C"/><rect x="298.2" y="3.6" width="1.4" height="1.4" fill="#9C9C9C"/><rect x="295.2" y="6.6" width="1.4" height="1.4" fill="#9C9C9C"/><rect x="301.2" y="0.6" width="1.4" height="1.4" fill="#9C9C9C"/><rect x="304.2" y="3.6" width="1.4" height="1.4" fill="#9C9C9C"/><rect x="301.2" y="6.6" width="1.4" height="1.4" fill="#9C9C9C"/><rect x="307.2" y="0.6" width="1.4" height="1.4" fill="#9C9C9C"/><rect x="310.2" y="3.6" width="1.4" height="1.4" fill="#9C9C9C"/><rect x="307.2" y="6.6" width="1.4" height="1.4" fill="#9C9C9C"/><rect x="313.2" y="0.6" width="1.4" height="1.4" fill="#9C9C9C"/><rect x="316.2" y="3.6" width="1.4" height="1.4" fill="#9C9C9C"/><rect x="313.2" y="6.6" width="1.4" height="1.4" fill="#9C9C9C"/><rect x="319.2" y="0.6" width="1.4" height="1.4" fill="#9C9C9C"/><rect x="322.2" y="3.6" width="1.4" height="1.4" fill="#9C9C9C"/><rect x="319.2" y="6.6" width="1.4" height="1.4" fill="#9C9C9C"/><rect x="325.2" y="0.6" width="1.4" height="1.4" fill="#9C9C9C"/><rect x="328.2" y="3.6" width="1.4" height="1.4" fill="#9C9C9C"/><rect x="325.2" y="6.6" width="1.4" height="1.4" fill="#9C9C9C"/><rect x="331.2" y="0.6" width="1.4" height="1.4" fill="#9C9C9C"/><rect x="334.2" y="3.6" width="1.4" height="1.4" fill="#9C9C9C"/><rect x="331.2" y="6.6" width="1.4" height="1.4" fill="#9C9C9C"/><rect x="337.2" y="0.6" width="1.4" height="1.4" fill="#9C9C9C"/><rect x="340.2" y="3.6" width="1.4" height="1.4" fill="#9C9C9C"/><rect x="337.2" y="6.6" width="1.4" height="1.4" fill="#9C9C9C"/></svg><svg style="left:2073px;top:166.5px;" width="12" height="5" viewBox="0 0 12 5"><path d="M0 0 H12 L6.0 5 Z" fill="#1E1E1E"/></svg><svg style="left:2099px;top:162px;" width="12" height="16" viewBox="0 0 12 16"><path d="M3 1 H9 M4 1 V9 M8 1 V9 M1 9.5 H11 M6 9.5 V16" stroke="#1E1E1E" stroke-width="1.8" fill="none"/><rect x="4" y="1" width="2" height="8" fill="#1E1E1E"/></svg><svg style="left:2124px;top:164px;" width="15" height="12" viewBox="0 0 15 12"><path d="M1 0.5 L14 11.5 M14 0.5 L1 11.5" stroke="#1E1E1E" stroke-width="2"/></svg><svg style="left:1647px;top:195.5px;" width="21.5" height="21.5" viewBox="0 0 21.5 21.5"><g transform="translate(10.75 10.75)"><circle r="6.45" fill="none" stroke="#424242" stroke-width="3.8699999999999997"/><rect x="-2.15" y="-10.75" width="4.3" height="6.45" fill="#424242" transform="rotate(0)"/><rect x="-2.15" y="-10.75" width="4.3" height="6.45" fill="#424242" transform="rotate(45)"/><rect x="-2.15" y="-10.75" width="4.3" height="6.45" fill="#424242" transform="rotate(90)"/><rect x="-2.15" y="-10.75" width="4.3" height="6.45" fill="#424242" transform="rotate(135)"/><rect x="-2.15" y="-10.75" width="4.3" height="6.45" fill="#424242" transform="rotate(180)"/><rect x="-2.15" y="-10.75" width="4.3" height="6.45" fill="#424242" transform="rotate(225)"/><rect x="-2.15" y="-10.75" width="4.3" height="6.45" fill="#424242" transform="rotate(270)"/><rect x="-2.15" y="-10.75" width="4.3" height="6.45" fill="#424242" transform="rotate(315)"/></g></svg><div style="left:1685px;top:191px;width:1.5px;height:31px;background:#CCCEDB"></div><svg style="left:1697px;top:196px;" width="23" height="22" viewBox="0 0 23 22"><path d="M12 1 H1 V21 H12" stroke="#424242" stroke-width="1.8" fill="none"/><path d="M7 11 H20 M14 5 L20 11 L14 17" stroke="#00539C" stroke-width="2.6" fill="none"/></svg><div style="left:1735.5px;top:191px;width:1.5px;height:31px;background:#CCCEDB"></div><svg style="left:1749px;top:196px;" width="20" height="20" viewBox="0 0 20 20"><circle cx="7.5" cy="7.5" r="6.2" fill="none" stroke="#424242" stroke-width="1.6"/><path d="M12 12 L18.5 18.5" stroke="#424242" stroke-width="2.6"/><path d="M4.5 7.5 H10.5 M7.5 4.5 V10.5" stroke="#00539C" stroke-width="1.6"/></svg><svg style="left:1788px;top:196px;" width="20" height="20" viewBox="0 0 20 20"><circle cx="7.5" cy="7.5" r="6.2" fill="none" stroke="#424242" stroke-width="1.6"/><path d="M12 12 L18.5 18.5" stroke="#424242" stroke-width="2.6"/><path d="M4.5 7.5 H10.5" stroke="#00539C" stroke-width="1.6"/></svg><svg style="left:1823px;top:196px;" width="22" height="22" viewBox="0 0 22 22"><path d="M2 5 Q2 1 5.5 1 Q9 1 9 4.5 Q9 7.5 5.5 8.5" stroke="#00539C" stroke-width="1.7" fill="none"/><path d="M0.5 3 L3 6.5 L5.5 3.5 Z" fill="#00539C"/><rect x="3" y="15" width="3" height="6" fill="#424242"/><rect x="8" y="10" width="3" height="11" fill="#424242"/><rect x="13" y="12" width="3" height="9" fill="#424242"/><rect x="18" y="6" width="3" height="15" fill="#424242" transform="translate(0 0)"/></svg><div style="left:2124px;top:186.5px;width:25.5px;height:472px;background:#F5F5F5"></div><svg style="left:2126.5px;top:200.5px;" width="20" height="16" viewBox="0 0 20 16"><path d="M1 14 L10 4 L19 14" stroke="#868999" stroke-width="4.2" fill="none"/></svg><div style="left:2125px;top:221px;width:23px;height:401.5px;background:#C2C3C9"></div><svg style="left:2126.5px;top:629px;" width="20" height="16" viewBox="0 0 20 16"><path d="M1 2 L10 12 L19 2" stroke="#868999" stroke-width="4.2" fill="none"/></svg><div style="left:1631px;top:227.5px;width:493px;height:430.5px;background:#F5F5F5"></div><div class="t" style="left:1646px;top:234.06px;font-size:18px;line-height:18px;color:#1E1E1E;font-weight:bold;letter-spacing:0.38px">诊断会话: 43 秒 (选择了 43.188 秒)</div><div style="left:1631px;top:257px;width:493px;height:1.6px;background:#CCCEDB"></div><div style="left:1723.75px;top:285px;width:1.5px;height:6.5px;background:#CCCEDB"></div><div style="left:1760.25px;top:285px;width:1.5px;height:6.5px;background:#CCCEDB"></div><div style="left:1797.75px;top:285px;width:1.5px;height:6.5px;background:#CCCEDB"></div><div style="left:1833.95px;top:285px;width:1.5px;height:6.5px;background:#CCCEDB"></div><div style="left:1908.25px;top:285px;width:1.5px;height:6.5px;background:#CCCEDB"></div><div style="left:1944.65px;top:285px;width:1.5px;height:6.5px;background:#CCCEDB"></div><div style="left:1981.75px;top:285px;width:1.5px;height:6.5px;background:#CCCEDB"></div><div style="left:2018.65px;top:285px;width:1.5px;height:6.5px;background:#CCCEDB"></div><div style="left:1871px;top:258.6px;width:1.5px;height:33px;background:#CCCEDB"></div><div style="left:2055.8px;top:258.6px;width:1.5px;height:33px;background:#CCCEDB"></div><div class="t" style="left:1875px;top:263.21px;font-size:17px;line-height:17px;color:#555555;">20秒</div><div class="t" style="left:2059px;top:263.21px;font-size:17px;line-height:17px;color:#555555;">40秒</div><div style="left:2094px;top:259px;width:30px;height:32.5px;background:#F5F5F5"></div><div style="left:1678.8px;top:259px;width:8.4px;height:32.4px;background:#1E1E1E"></div><div style="left:2085.3px;top:259px;width:7.7px;height:32.4px;background:#1E1E1E"></div><div style="left:1631px;top:291.2px;width:493px;height:1.8px;background:#CCCEDB"></div><svg style="left:1640px;top:302.3px;" width="11.5" height="11" viewBox="0 0 11.5 11"><path d="M11.5 0 V11 H0 Z" fill="#424242"/></svg><div class="t" style="left:1657px;top:300.26px;font-size:18px;line-height:18px;color:#1E1E1E;font-weight:bold;">事件</div><div style="left:1685px;top:322.3px;width:409.5px;height:34px;background:#F5F5F5;border:2px solid #CCCEDB;box-sizing:border-box"></div><div style="left:1871px;top:323.8px;width:1.5px;height:31px;background:#CCCEDB"></div><div style="left:2055.8px;top:323.8px;width:1.5px;height:31px;background:#CCCEDB"></div><div style="left:2085.5px;top:323.8px;width:7.5px;height:31px;background:#DDDDDD"></div><div style="left:1687px;top:331px;width:397px;height:20.5px;background:#737373"></div><div style="left:1659px;top:331px;width:4.6px;height:14px;background:#424242"></div><div style="left:1667.3px;top:331px;width:4.6px;height:14px;background:#424242"></div><svg style="left:1640px;top:370px;" width="11.5" height="11" viewBox="0 0 11.5 11"><path d="M11.5 0 V11 H0 Z" fill="#424242"/></svg><div class="t" style="left:1657px;top:366.26px;font-size:18px;line-height:18px;color:#1E1E1E;font-weight:bold;letter-spacing:0.502px;">进程内存 (MB)</div><svg style="left:1819px;top:365px;" width="10" height="18" viewBox="0 0 10 18"><path d="M0 0 H10 L8.5 12 L5 17.5 L1.5 12 Z" fill="#F6B61A"/></svg><div class="t" style="left:1835.5px;top:366.19px;font-size:17.5px;line-height:17.5px;color:#1E1E1E;">GC</div><svg style="left:1875.5px;top:365px;" width="18.5" height="15.5" viewBox="0 0 18.5 15.5"><path d="M0 0 H18.5 L9.25 15.5 Z" fill="#1F7AD7"/></svg><div class="t" style="left:1897.5px;top:366.69px;font-size:17.5px;line-height:17.5px;color:#1E1E1E;">快照</div><div style="left:1948px;top:365px;width:18px;height:18px;background:#7FB2CB;border-radius:50%"></div><div class="t" style="left:1969.5px;top:366.69px;font-size:17.5px;line-height:17.5px;color:#1E1E1E;">专用字节</div><div style="left:1685px;top:392.3px;width:410px;height:104.4px;background:#F5F5F5;border:2px solid #CCCEDB;box-sizing:border-box"></div><div style="left:1871px;top:394px;width:1.5px;height:101px;background:#CCCEDB"></div><div style="left:2055.8px;top:394px;width:1.5px;height:101px;background:#CCCEDB"></div><div style="left:2085px;top:394px;width:8px;height:101px;background:#DDDDDD"></div><svg style="left:1685px;top:392px;" width="410" height="105" viewBox="0 0 410 105"><polygon points="1688,495 1688,427.4 2048.8,427.4 2057,423.7 2065,421.9 2068,418 2071,411 2075,408 2080,407 2083,404 2085,402.3 2085,495" fill="#A5C6D9" stroke="#93BBD2" stroke-width="1.2" transform="translate(-1685 -392)"/><path d="M186.8 3 V103 M371.5 3 V103" stroke="#8FB5CC" stroke-width="1" opacity="0.6"/></svg><div class="t" style="left:1647px;top:394.76px;font-size:18px;line-height:18px;color:#1E1E1E;">382</div><div class="t" style="left:1667.5px;top:477.36px;font-size:18px;line-height:18px;color:#1E1E1E;">0</div><div class="t" style="left:2103px;top:394.56px;font-size:18px;line-height:18px;color:#1E1E1E;">38</div><div class="t" style="left:2103px;top:477.36px;font-size:18px;line-height:18px;color:#1E1E1E;">0</div><svg style="left:1640px;top:506.3px;" width="11.5" height="11" viewBox="0 0 11.5 11"><path d="M11.5 0 V11 H0 Z" fill="#424242"/></svg><div class="t" style="left:1657px;top:503.46px;font-size:18px;line-height:18px;color:#1E1E1E;font-weight:bold;">CPU (所有处理器的百分比)</div><div style="left:1685px;top:526.2px;width:410px;height:104px;background:#F5F5F5;border:2px solid #CCCEDB;box-sizing:border-box"></div><div style="left:1871px;top:528px;width:1.5px;height:100.5px;background:#CCCEDB"></div><div style="left:2055.8px;top:528px;width:1.5px;height:100.5px;background:#CCCEDB"></div><div style="left:2085px;top:528px;width:8px;height:100.5px;background:#DDDDDD"></div><svg style="left:1685px;top:526px;" width="410" height="105" viewBox="0 0 410 105"><polygon points="1688,628.5 1688,627.6 2044,627.6 2049,625 2052,620 2055,621 2058,619 2062,618.5 2066,620.5 2070,617 2074,617.5 2078,619 2082,617 2085,614 2085,628.5" fill="#A5C6D9" stroke="#93BBD2" stroke-width="1" transform="translate(-1685 -526)"/></svg><div class="t" style="left:1646px;top:528.76px;font-size:18px;line-height:18px;color:#1E1E1E;">100</div><div class="t" style="left:1667.5px;top:610.76px;font-size:18px;line-height:18px;color:#1E1E1E;">0</div><div class="t" style="left:2102.5px;top:528.76px;font-size:18px;line-height:18px;color:#1E1E1E;">10</div><div class="t" style="left:2103px;top:610.76px;font-size:18px;line-height:18px;color:#1E1E1E;">0</div><div style="left:1631px;top:657.8px;width:518.5px;height:4.2px;background:#D5D6DC"></div><div style="left:1631px;top:662.2px;width:518.5px;height:550.6px;background:#F5F5F5"></div><div style="left:1637px;top:668px;width:55px;height:29px;background:#E6E7ED"></div><div class="t" style="left:1647px;top:674.69px;font-size:17.5px;line-height:17.5px;color:#1E1E1E;">摘要</div><div class="t" style="left:1702.5px;top:674.69px;font-size:17.5px;line-height:17.5px;color:#1E1E1E;">事件</div><div class="t" style="left:1758px;top:674.69px;font-size:17.5px;line-height:17.5px;color:#1E1E1E;">内存使用率</div><div class="t" style="left:1866px;top:674.69px;font-size:17.5px;line-height:17.5px;color:#1E1E1E;">CPU 使用率</div><div style="left:1631px;top:700px;width:518.5px;height:2.4px;background:#CCCEDB"></div><div style="left:1631px;top:733.8px;width:518.5px;height:2.4px;background:#CCCEDB"></div><div style="left:1631px;top:777.5px;width:518.5px;height:2.4px;background:#CCCEDB"></div><div style="left:1631px;top:811.2px;width:518.5px;height:2.4px;background:#CCCEDB"></div><div style="left:1631px;top:854.5px;width:518.5px;height:2.4px;background:#CCCEDB"></div><div style="left:1631px;top:888px;width:518.5px;height:2.4px;background:#CCCEDB"></div><div class="t" style="left:1645px;top:709.69px;font-size:17.5px;line-height:17.5px;color:#1E1E1E;font-weight:bold;">事件</div><svg style="left:1654px;top:752px;" width="19" height="9" viewBox="0 0 19 9"><path d="M1 4.5 L4.5 1 L8 4.5 L4.5 8 Z" fill="none" stroke="#424242" stroke-width="1.2"/><path d="M9 1.5 L12 4.5 L9 7.5 M13 1.5 L16 4.5 L13 7.5" stroke="#424242" stroke-width="1.2" fill="none"/></svg><div class="t" style="left:1685.5px;top:748.69px;font-size:17.5px;line-height:17.5px;color:#1E1E1E;">所有事件(1 个，共 1 个)</div><div class="t" style="left:1645px;top:787.19px;font-size:17.5px;line-height:17.5px;color:#1E1E1E;font-weight:bold;">内存使用率</div><svg style="left:1654.5px;top:827px;" width="18" height="14" viewBox="0 0 18 14"><path d="M0 2.5 H4 L5.5 0 H12 L13.5 2.5 H18 V14 H0 Z" fill="#424242"/><circle cx="9.5" cy="8" r="3.3" fill="none" stroke="#fff" stroke-width="1.4"/><rect x="2" y="3.5" width="2" height="1.5" fill="#fff"/></svg><div class="t" style="left:1685.5px;top:825.69px;font-size:17.5px;line-height:17.5px;color:#1E1E1E;">截取快照</div><div class="t" style="left:1645px;top:864.19px;font-size:17.5px;line-height:17.5px;color:#1E1E1E;font-weight:bold;">CPU 使用率</div><div style="left:1657px;top:904px;width:12.5px;height:12.5px;background:#424242;border-radius:50%"></div><div class="t" style="left:1685.5px;top:902.19px;font-size:17.5px;line-height:17.5px;color:#1E1E1E;">记录 CPU 配置文件</div><div style="left:1631px;top:1212.8px;width:518.5px;height:1.8px;background:#CCCEDB"></div><div style="left:1864px;top:1212.8px;width:57.5px;height:32px;background:#CCCEDB"></div><div style="left:1865.8px;top:1211px;width:53.9px;height:31.8px;background:#F5F5F5"></div><svg style="left:1703px;top:1217.7px;" width="22" height="21" viewBox="0 0 22 21"><rect x="6" y="1" width="11" height="14" fill="#424242"/><path d="M8.5 4 H14.5 M8.5 7 H14.5" stroke="#fff" stroke-width="1.2"/><circle cx="5" cy="17" r="4.2" fill="#424242"/><path d="M5 8 V16" stroke="#424242" stroke-width="1.5"/></svg><svg style="left:1764px;top:1217.7px;" width="22" height="21" viewBox="0 0 22 21"><path d="M4 2 H1 V19 H4 M17 2 H20 V19 H17" stroke="#424242" stroke-width="1.6" fill="none"/><path d="M6 13 L15 7" stroke="#424242" stroke-width="1.6" stroke-dasharray="2 2"/><circle cx="7" cy="8" r="1.6" fill="#424242"/><circle cx="14" cy="13" r="1.6" fill="#424242"/></svg><svg style="left:1822px;top:1217.7px;" width="22" height="21" viewBox="0 0 22 21"><path d="M1 1 H20 V13 M1 1 V13" stroke="#424242" stroke-width="1.6" fill="none"/><rect x="1" y="1" width="19" height="3" fill="#424242"/><circle cx="6" cy="16" r="3" fill="none" stroke="#424242" stroke-width="1.8"/><circle cx="15" cy="16" r="3" fill="none" stroke="#424242" stroke-width="1.8"/><path d="M9 16 H12" stroke="#424242" stroke-width="1.5"/></svg><svg style="left:1882px;top:1217.7px;" width="22" height="21" viewBox="0 0 22 21"><rect x="1" y="1" width="20" height="18" fill="none" stroke="#1E1E1E" stroke-width="2"/><path d="M4 15 L8 8 L11 12 L14 6 L18 14" stroke="#1E1E1E" stroke-width="1.8" fill="none"/></svg><svg style="left:1941px;top:1217.7px;" width="22" height="21" viewBox="0 0 22 21"><path d="M1 4 V1 H20 V16 H17" stroke="#424242" stroke-width="2" fill="none"/><rect x="1" y="1" width="19" height="3" fill="#424242"/><path d="M10 8 L14 10 V17 L10 19 L5 15 L3 16.5 L1.5 15.5 V11.5 L3 10.5 L5 12 Z M10 11 L7 13.5 L10 16 Z" fill="#865FC5"/></svg><svg style="left:2001px;top:1217.7px;" width="22" height="21" viewBox="0 0 22 21"><circle cx="6" cy="5" r="3.6" fill="#424242"/><path d="M0 17 Q0 9 6 9 Q12 9 12 17 Z" fill="#424242"/><circle cx="15" cy="7" r="3.4" fill="#424242"/><path d="M9.5 19 Q9.5 11.5 15 11.5 Q20.5 11.5 20.5 19 Z" fill="#424242" stroke="#EEEEF2" stroke-width="1"/></svg><svg style="left:2058px;top:1217.7px;" width="22" height="21" viewBox="0 0 22 21"><path d="M15.5 1.5 Q11 2 11.5 6.5 L1.5 16.5 L4 19 L14 9 Q18.5 9.5 19.5 5 L16.5 6 L14.5 4 Z" fill="#424242"/></svg><svg style="left:2112.7px;top:1217.7px;" width="22" height="21" viewBox="0 0 22 21"><path d="M0 1 H21 L12 9 L14.5 20 L12 20 L7 9 Z" fill="#424242"/></svg><div style="left:0px;top:1254px;width:2160px;height:36px;background:#CA5100"></div><svg style="left:6px;top:1265px;" width="23" height="16.5" viewBox="0 0 23 16.5"><path d="M4.5 1 H22 L18.5 15.5 H1 Z" fill="none" stroke="#fff" stroke-width="1.8"/></svg><div class="t" style="left:41.5px;top:1264.69px;font-size:17.5px;line-height:17.5px;color:#fff;">就绪</div><svg style="left:1476.5px;top:1265px;" width="13" height="16" viewBox="0 0 13 16"><path d="M6.5 16 V5" stroke="#D8D8D8" stroke-width="2.6"/><path d="M0.5 7.5 L6.5 0.5 L12.5 7.5 L10.5 8.5 L6.5 4.5 L2.5 8.5 Z" fill="#D8D8D8"/></svg><div class="t" style="left:1504.5px;top:1263.69px;font-size:17.5px;line-height:17.5px;color:#fff;">0</div><svg style="left:1524px;top:1269px;" width="12" height="6.5" viewBox="0 0 12 6.5"><path d="M0 6.5 L6 0 L12 6.5 Z" fill="#fff"/></svg><svg style="left:1572px;top:1263px;" width="18.5" height="18" viewBox="0 0 18.5 18"><path d="M14 1 L17.5 4.5 L6 16 L1.5 17 L2.5 12.5 Z" fill="#D8D8D8"/><path d="M12 3 L15.5 6.5" stroke="#CA5100" stroke-width="1.2"/></svg><div class="t" style="left:1602.5px;top:1263.69px;font-size:17.5px;line-height:17.5px;color:#fff;">0</div><svg style="left:1647px;top:1262.5px;" width="22" height="20" viewBox="0 0 22 20"><path d="M11 0 L21.5 10 L11 20 L0.5 10 Z" fill="#D8D8D8"/><path d="M8 5 L14 11 M11 8 V15" stroke="#CA5100" stroke-width="1.6"/><circle cx="11" cy="15" r="1.8" fill="#CA5100"/><circle cx="14" cy="11" r="1.8" fill="#CA5100"/></svg><div class="t" style="left:1679px;top:1264.26px;font-size:18px;line-height:18px;color:#fff;">sscms.hits</div><svg style="left:1773px;top:1269px;" width="12" height="6.5" viewBox="0 0 12 6.5"><path d="M0 6.5 L6 0 L12 6.5 Z" fill="#fff"/></svg><svg style="left:1819px;top:1261px;" width="23" height="21" viewBox="0 0 23 21"><path d="M3 3 L11.5 11.5 L20 3 M11.5 11.5 V20.5" stroke="#D8D8D8" stroke-width="1.8" fill="none"/><path d="M1.5 7.5 V1.5 H7.5 M15.5 1.5 H21.5 V7.5" stroke="#D8D8D8" stroke-width="1.8" fill="none"/></svg><div class="t" style="left:1851.5px;top:1264.26px;font-size:18px;line-height:18px;color:#fff;letter-spacing:0.498px;">master</div><svg style="left:1919px;top:1269px;" width="12" height="6.5" viewBox="0 0 12 6.5"><path d="M0 6.5 L6 0 L12 6.5 Z" fill="#fff"/></svg><svg style="left:1972px;top:1261px;" width="30" height="26" viewBox="0 0 30 26"><path d="M8 2 Q14 2 14 9 V14 L16 17 H0 L2 14 V9 Q2 2 8 2 Z" fill="#D8D8D8"/><circle cx="20.5" cy="16.5" r="8.6" fill="#fff"/><text x="16" y="22.3" font-family="Liberation Sans" font-size="15" fill="#000">4</text></svg><svg style="left:2039px;top:1259px;" width="23" height="26" viewBox="0 0 23 26"><path d="M5.5 9.5 H20.5 L18 22 H7.5 L2 25 L3.5 20 Z" fill="#EDEDED" stroke="#fff" stroke-width="3"/><path d="M5.5 9.5 H20.5 L18 22 H7.5 L2 25 L3.5 20 Z" fill="#EDEDED" stroke="#3A3A3A" stroke-width="1.3"/><path d="M11.2 1.2 H16.5 L15 12 H10 Z" fill="#F6921E" stroke="#fff" stroke-width="1"/><path d="M9.6 14 H14.6 L14.1 17.5 H9.1 Z" fill="#F6921E"/></svg><svg style="left:2067.5px;top:1261px;" width="25" height="22" viewBox="0 0 25 22"><path d="M2 2 H23 L12.5 20.5 Z" fill="#6E6E6E" stroke="#fff" stroke-width="1.6" stroke-linejoin="round"/><path d="M8.8 7 H16.2 L12.5 13 Z" fill="#CA5100"/></svg><svg style="left:2100px;top:1258px;" width="29" height="29" viewBox="0 0 29 29"><circle cx="14.5" cy="14.5" r="14" fill="#2E9B39" stroke="#fff" stroke-width="1.2"/><path d="M7.5 14.5 L12.5 19.5 L21.5 8.5" stroke="#fff" stroke-width="3.2" fill="none"/></svg><svg style="left:2141px;top:1273px;" width="15" height="15" viewBox="0 0 15 15"><rect x="12" y="0" width="2" height="2" fill="#E8A27A"/><rect x="9" y="3" width="2" height="2" fill="#E8A27A"/><rect x="12" y="3" width="2" height="2" fill="#E8A27A"/><rect x="6" y="6" width="2" height="2" fill="#E8A27A"/><rect x="9" y="6" width="2" height="2" fill="#E8A27A"/><rect x="12" y="6" width="2" height="2" fill="#E8A27A"/><rect x="3" y="9" width="2" height="2" fill="#E8A27A"/><rect x="6" y="9" width="2" height="2" fill="#E8A27A"/><rect x="9" y="9" width="2" height="2" fill="#E8A27A"/><rect x="12" y="9" width="2" height="2" fill="#E8A27A"/><rect x="0" y="12" width="2" height="2" fill="#E8A27A"/><rect x="3" y="12" width="2" height="2" fill="#E8A27A"/><rect x="6" y="12" width="2" height="2" fill="#E8A27A"/><rect x="9" y="12" width="2" height="2" fill="#E8A27A"/><rect x="12" y="12" width="2" height="2" fill="#E8A27A"/></svg>
</body></html>
